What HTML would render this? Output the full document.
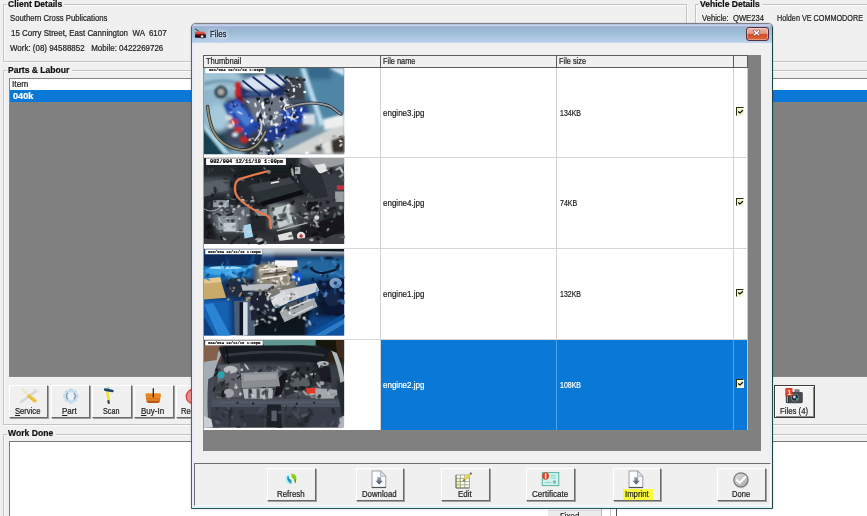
<!DOCTYPE html>
<html lang="en"><head><meta charset="utf-8"><title>Files</title>
<style>
html,body{margin:0;padding:0}
body{width:867px;height:516px;overflow:hidden;background:#f0f0f0;position:relative;font-family:"Liberation Sans",sans-serif;font-size:8.8px}
.a{position:absolute;box-sizing:border-box}
.t{-webkit-text-stroke:.22px currentColor;position:absolute;white-space:pre;line-height:12px;transform-origin:0 0;display:block}
.gb{border:1px solid #c4c4c4;box-shadow:1px 1px 0 #fbfbfb, inset 1px 1px 0 #fbfbfb}
.lbl{background:#f0f0f0}
.btn{background:#f0f0f0;border-top:1px solid #fff;border-left:1px solid #fff;border-right:1px solid #696969;border-bottom:1px solid #696969;box-shadow:1px 1px 0 #a0a0a0}
svg{position:absolute;overflow:visible}
u{text-decoration:underline}

</style></head>
<body>
<div class="a gb" style="left:2.5px;top:3.5px;width:684px;height:58px;"></div>
<div class="a lbl" style="left:6.5px;top:0px;width:57.5px;height:9px;"></div>
<span class="t" style="left:8.30px;top:-1.79px;font-size:9.2px;color:#101010;transform:scaleX(0.9312);font-weight:bold;">Client Details</span>
<span class="t" style="left:10.00px;top:11.75px;font-size:8.8px;color:#1e1e1e;transform:scaleX(0.8775);">Southern Cross Publications</span>
<span class="t" style="left:11.40px;top:27.05px;font-size:8.8px;color:#1e1e1e;transform:scaleX(0.9031);">15 Corry Street, East Cannington  WA  6107</span>
<span class="t" style="left:10.00px;top:42.15px;font-size:8.8px;color:#1e1e1e;transform:scaleX(0.9042);">Work: (08) 94588852   Mobile: 0422269726</span>
<div class="a gb" style="left:695px;top:3.5px;width:185px;height:58px;"></div>
<div class="a lbl" style="left:698.5px;top:0px;width:63.5px;height:9px;"></div>
<span class="t" style="left:700.30px;top:-1.79px;font-size:9.2px;color:#101010;transform:scaleX(0.9276);font-weight:bold;">Vehicle Details</span>
<span class="t" style="left:702.30px;top:11.85px;font-size:8.8px;color:#1e1e1e;transform:scaleX(0.8671);">Vehicle:  QWE234</span>
<span class="t" style="left:776.80px;top:11.85px;font-size:8.8px;color:#1e1e1e;transform:scaleX(0.8221);">Holden VE COMMODORE</span>
<div class="a gb" style="left:2.5px;top:70px;width:877.5px;height:354.5px;"></div>
<div class="a lbl" style="left:6.5px;top:65px;width:65px;height:11px;"></div>
<span class="t" style="left:8.30px;top:64.21px;font-size:9.2px;color:#101010;transform:scaleX(0.9323);font-weight:bold;">Parts &amp; Labour</span>
<div class="a " style="left:9px;top:77.6px;width:871px;height:299.9px;background:#808080;border:1px solid #868686"></div>
<div class="a " style="left:10.5px;top:101px;width:869.5px;height:1px;background:#33608e"></div>
<div class="a " style="left:10px;top:78.6px;width:870px;height:11.4px;background:#fff"></div>
<span class="t" style="left:12.00px;top:78.25px;font-size:8.8px;color:#1e1e1e;transform:scaleX(0.9527);">Item</span>
<div class="a " style="left:10px;top:90px;width:870px;height:11.5px;background:#0a78d6"></div>
<span class="t" style="left:12.70px;top:89.61px;font-size:9.2px;color:#fff;transform:scaleX(0.9925);font-weight:bold;">040k</span>
<div class="a btn" style="left:8.5px;top:385px;width:39.9px;height:33px;"></div>
<div class="a btn" style="left:50.5px;top:385px;width:39.6px;height:33px;"></div>
<div class="a btn" style="left:92.2px;top:385px;width:39.6px;height:33px;"></div>
<div class="a btn" style="left:133.7px;top:385px;width:39.9px;height:33px;"></div>
<div class="a btn" style="left:175.5px;top:385px;width:39.5px;height:33px;"></div>
<svg style="left:18px;top:386px" width="22" height="20" viewBox="18 386 22 20"><g stroke-linecap="round" fill="none"><path d="M21 402 L35.5 391.5" stroke="#d4d8dc" stroke-width="2.4"/><path d="M34 390 l3 1.5" stroke="#dde0e4" stroke-width="2.5"/><path d="M21.5 388.8 L28 395" stroke="#ede6b4" stroke-width="1.6"/><path d="M28 395.2 L36 401.6" stroke="#e6bd30" stroke-width="3.4" stroke-linecap="butt"/><path d="M28.6 394.6 L36.6 401" stroke="#f2d668" stroke-width="1"/></g></svg>
<svg style="left:62px;top:387px" width="18" height="18" viewBox="62 387 18 18"><path d="M78.05 394.65 L78.05 397.55 L76.25 397.75 L75.85 398.71 L76.98 400.13 L74.93 402.18 L73.51 401.05 L72.55 401.45 L72.35 403.25 L69.45 403.25 L69.25 401.45 L68.29 401.05 L66.87 402.18 L64.82 400.13 L65.95 398.71 L65.55 397.75 L63.75 397.55 L63.75 394.65 L65.55 394.45 L65.95 393.49 L64.82 392.07 L66.87 390.02 L68.29 391.15 L69.25 390.75 L69.45 388.95 L72.35 388.95 L72.55 390.75 L73.51 391.15 L74.93 390.02 L76.98 392.07 L75.85 393.49 L76.25 394.45 Z" fill="#c9e0ec" stroke="#b4d0e0" stroke-width=".6" stroke-linejoin="round"/><circle cx="70.9" cy="396.1" r="3.9" fill="#e8f3f8"/><path d="M68 392.9 a4.3 4.3 0 0 0 0 6.4 M73.8 392.9 a4.3 4.3 0 0 1 0 6.4" fill="none" stroke="#7a90a8" stroke-width="1.2"/></svg><svg style="left:102px;top:386px" width="14" height="20" viewBox="102 386 14 20"><g fill="none" stroke-linecap="round"><path d="M107.4 392 L108.8 400.4" stroke="#efe142" stroke-width="2.8"/><path d="M108.4 401 l0.4 2" stroke="#3c4648" stroke-width="2.2"/><path d="M105.2 389.6 L112.4 391" stroke="#20406a" stroke-width="2.6"/><path d="M106.4 388.6 l2.4 -0.6" stroke="#58a0b0" stroke-width="1.2"/></g></svg>
<svg style="left:143px;top:386px" width="20" height="19" viewBox="143 386 20 19"><defs><linearGradient id="gbk" x1="0" y1="0" x2="0" y2="1"><stop offset="0" stop-color="#ec9024"/><stop offset=".5" stop-color="#e07818"/><stop offset="1" stop-color="#b4500e"/></linearGradient></defs><path d="M145.4 394.6 Q145.4 393.2 147 393.2 H159.4 Q161 393.2 161 394.6 L159.8 401.6 Q159.6 403 158 403 H148.4 Q146.8 403 146.6 401.6 Z" fill="url(#gbk)"/><path d="M146.4 397 H160 M147 400 H159.6" stroke="#f4a848" stroke-width=".7" fill="none"/><path d="M153.3 388.3 V397.4" stroke="#3a1c0c" stroke-width="1.3"/></svg>
<svg style="left:184px;top:388px" width="18" height="18" viewBox="184 388 18 18"><circle cx="193.5" cy="396.5" r="7.2" fill="#ec8c8c" stroke="#d84848" stroke-width="1.4"/></svg>

<span class="t" style="left:15.40px;top:404.75px;font-size:8.8px;color:#1e1e1e;transform:scaleX(0.8656);"><u>S</u>ervice</span>
<span class="t" style="left:61.90px;top:404.75px;font-size:8.8px;color:#1e1e1e;transform:scaleX(0.9107);"><u>P</u>art</span>
<span class="t" style="left:103.30px;top:404.75px;font-size:8.8px;color:#1e1e1e;transform:scaleX(0.8174);">Scan</span>
<span class="t" style="left:140.90px;top:404.75px;font-size:8.8px;color:#1e1e1e;transform:scaleX(0.9120);"><u>B</u>uy-In</span>
<span class="t" style="left:180.80px;top:404.75px;font-size:8.8px;color:#1e1e1e;transform:scaleX(0.8750);">Rec</span>
<div class="a " style="left:774px;top:385px;width:40.5px;height:33px;background:#f3f3f3;border:1px solid #3a3a3a;box-shadow:inset 1px 1px 0 #fff, inset -1px -1px 0 #8a8a8a"></div>
<svg style="left:784px;top:387px" width="20" height="17" viewBox="784 387 20 17"><rect x="794.4" y="389.2" width="5.2" height="3.4" rx="1" fill="#7a7e84"/><rect x="785.8" y="392" width="17" height="11.2" rx="1.4" fill="#474b50"/><rect x="786" y="396" width="3.2" height="7" fill="#2c3034"/><rect x="786.8" y="396.4" width="1" height="6" fill="#b8c4c0"/><circle cx="795" cy="397.6" r="3.7" fill="#1d2c3c" stroke="#8a9094" stroke-width=".8"/><circle cx="794.4" cy="397" r="1.4" fill="#d8d0e8"/><circle cx="797" cy="399" r="1.1" fill="#48b088"/><rect x="785.3" y="388" width="7.2" height="8.2" rx="1.2" fill="#e03a2a"/><text x="787.3" y="395.2" font-family="'Liberation Sans',sans-serif" font-weight="bold" font-size="7.5" fill="#fff4c8">1</text></svg>

<span class="t" style="left:779.70px;top:405.05px;font-size:8.8px;color:#1e1e1e;transform:scaleX(0.8842);">Files (4)</span>
<div class="a gb" style="left:2.5px;top:433.5px;width:877.5px;height:106.5px;"></div>
<div class="a lbl" style="left:6.5px;top:428px;width:49px;height:11px;"></div>
<span class="t" style="left:8.30px;top:427.31px;font-size:9.2px;color:#101010;transform:scaleX(0.9353);font-weight:bold;">Work Done</span>
<div class="a " style="left:9px;top:440.5px;width:871px;height:99.5px;background:#fff;border:1px solid #7a7a7a"></div>
<div class="a " style="left:548px;top:510px;width:53px;height:10px;background:#ececec;border-top:1px solid #d8d8d8"></div>
<div class="a " style="left:601px;top:509px;width:1px;height:7px;background:#b8b8b8"></div>
<div class="a " style="left:610px;top:509px;width:1px;height:7px;background:#c8c8c8"></div>
<div class="a " style="left:615.5px;top:509px;width:1.5px;height:7px;background:#555"></div>
<span class="t" style="left:559.70px;top:510.15px;font-size:8.8px;color:#1e1e1e;transform:scaleX(0.8970);">Fixed</span>
<div class="a " style="left:191px;top:23px;width:582px;height:486px;border-radius:5px 5px 1px 1px;background:#f0f0f0;border:1px solid;border-color:#7a8088 #1c4444 #2c5454 #566068;box-shadow:0 0 2px 0 rgba(0,0,0,.22), inset -1px -1px 0 #d2f3f7, inset 1px 1px 0 #e6ecf8, inset 0 0 0 2px #eaecf8;overflow:hidden"><div class="a" style="left:0;top:0;width:100%;height:19.4px;background:linear-gradient(180deg,#b4c0dc 0,#c6d0ea 1.6px,#9db1d1 2.8px,#9bbdd6 8.5px,#b5cde9 17px,#c2d6ee 18.6px,#f4f8fc 19.4px)"></div></div>
<svg style="left:193px;top:27px" width="15" height="13" viewBox="193 27 15 13"><defs><linearGradient id="gcar" x1="0" y1="0" x2="0" y2="1"><stop offset="0" stop-color="#e26a58"/><stop offset=".42" stop-color="#c4382a"/><stop offset=".5" stop-color="#5a0c14"/><stop offset="1" stop-color="#22040a"/></linearGradient></defs><path d="M195.1 28.9 L199.4 31.6" stroke="#343c4c" stroke-width="1.1" fill="none"/><path d="M195 32.6 Q195 31.6 196.2 31.6 H203 Q205.6 32.4 205.8 34.6 V37 Q205.8 37.8 204.8 37.8 H195.8 Q195 37.8 195 37 Z" fill="url(#gcar)"/><rect x="203" y="35" width="2.8" height="2.6" fill="#20203c"/><circle cx="202.1" cy="36.5" r="1.9" fill="#2a1418"/><circle cx="202.1" cy="36.5" r="1.25" fill="#f4ecec"/></svg>

<span class="t" style="left:209.90px;top:28.34px;font-size:9.4px;color:#16233f;transform:scaleX(0.8284);-webkit-text-stroke:.3px #16233f;text-shadow:0 0 3px #fff,0 0 5px #fff,0 0 6px #fff;">Files</span>
<div class="a " style="left:746px;top:27px;width:23px;height:13.5px;border:1px solid #55313f;border-radius:3px;background:linear-gradient(180deg,#eab3a4 0,#e39a86 45%,#d0502b 50%,#d8643a 100%);box-shadow:inset 0 0 0 1px rgba(255,255,255,.35)"></div>
<svg style="left:753.4px;top:30.4px" width="7.2" height="5.8" viewBox="0 0 8 6.4"><path d="M1.6 1.2 L6.4 5.2 M6.4 1.2 L1.6 5.2" stroke="#6a3038" stroke-width="2.6" stroke-linecap="square"/><path d="M1.6 1.2 L6.4 5.2 M6.4 1.2 L1.6 5.2" stroke="#fff" stroke-width="1.6" stroke-linecap="square"/></svg>
<div class="a " style="left:203px;top:55px;width:557.5px;height:396px;background:#808080"></div>
<div class="a " style="left:203px;top:55px;width:545px;height:12.5px;background:#f0f0f0;border-top:1px solid #5c5c5c;border-bottom:1px solid #5c5c5c;border-left:1px solid #5c5c5c"></div>
<div class="a " style="left:380px;top:55px;width:1px;height:12.5px;background:#5c5c5c"></div>
<div class="a " style="left:556px;top:55px;width:1px;height:12.5px;background:#5c5c5c"></div>
<div class="a " style="left:733px;top:55px;width:1px;height:12.5px;background:#5c5c5c"></div>
<div class="a " style="left:747px;top:55px;width:1px;height:12.5px;background:#5c5c5c"></div>
<span class="t" style="left:206.30px;top:55.15px;font-size:8.8px;color:#1e1e1e;transform:scaleX(0.8569);">Thumbnail</span>
<span class="t" style="left:382.60px;top:55.15px;font-size:8.8px;color:#1e1e1e;transform:scaleX(0.8388);">File name</span>
<span class="t" style="left:558.90px;top:55.15px;font-size:8.8px;color:#1e1e1e;transform:scaleX(0.8368);">File size</span>
<div class="a " style="left:203px;top:67.5px;width:545px;height:362.5px;background:#fff;border-left:1px solid #9a9a9a"></div>
<div class="a " style="left:381px;top:339.2px;width:367px;height:90.8px;background:#0a78d6"></div>
<div class="a " style="left:204px;top:157.2px;width:544px;height:1.2px;background:#d6d6d6"></div>
<div class="a " style="left:204px;top:247.9px;width:544px;height:1.2px;background:#d6d6d6"></div>
<div class="a " style="left:204px;top:338.6px;width:544px;height:1.2px;background:#d6d6d6"></div>
<div class="a " style="left:379.9px;top:67.5px;width:1.2px;height:362.5px;background:#d2d2d2"></div>
<div class="a " style="left:555.9px;top:67.5px;width:1.2px;height:362.5px;background:#d2d2d2"></div>
<div class="a " style="left:732.9px;top:67.5px;width:1.2px;height:362.5px;background:#d2d2d2"></div>
<div class="a " style="left:556px;top:339.7px;width:1px;height:90.3px;background:#4ca4f0"></div>
<div class="a " style="left:733px;top:339.7px;width:1px;height:90.3px;background:#4ca4f0"></div>
<div class="a " style="left:747px;top:67.5px;width:1px;height:362.5px;background:#c8c8c8"></div>
<span class="t" style="left:382.60px;top:106.60px;font-size:8.8px;color:#1e1e1e;transform:scaleX(0.9099);">engine3.jpg</span>
<span class="t" style="left:559.80px;top:106.60px;font-size:8.8px;color:#1e1e1e;transform:scaleX(0.7948);">134KB</span>
<div class="a " style="left:736px;top:107.45px;width:8.2px;height:8.3px;background:#f1f5d2;border-top:1px solid #2c2c10;border-left:1px solid #2c2c10;border-right:1px solid #f4f6e0;border-bottom:1px solid #f4f6e0"></div>
<svg style="left:737px;top:108.05px" width="7" height="7" viewBox="0 0 7 7"><path d="M1.2 3.6 L2.9 5 L5.9 2.3" fill="none" stroke="#0c0c04" stroke-width="1.3"/></svg>
<span class="t" style="left:382.60px;top:197.10px;font-size:8.8px;color:#1e1e1e;transform:scaleX(0.9099);">engine4.jpg</span>
<span class="t" style="left:559.80px;top:197.10px;font-size:8.8px;color:#1e1e1e;transform:scaleX(0.7988);">74KB</span>
<div class="a " style="left:736px;top:197.95px;width:8.2px;height:8.3px;background:#f1f5d2;border-top:1px solid #2c2c10;border-left:1px solid #2c2c10;border-right:1px solid #f4f6e0;border-bottom:1px solid #f4f6e0"></div>
<svg style="left:737px;top:198.55px" width="7" height="7" viewBox="0 0 7 7"><path d="M1.2 3.6 L2.9 5 L5.9 2.3" fill="none" stroke="#0c0c04" stroke-width="1.3"/></svg>
<span class="t" style="left:382.60px;top:287.80px;font-size:8.8px;color:#1e1e1e;transform:scaleX(0.9099);">engine1.jpg</span>
<span class="t" style="left:559.80px;top:287.80px;font-size:8.8px;color:#1e1e1e;transform:scaleX(0.7948);">132KB</span>
<div class="a " style="left:736px;top:288.65px;width:8.2px;height:8.3px;background:#f1f5d2;border-top:1px solid #2c2c10;border-left:1px solid #2c2c10;border-right:1px solid #f4f6e0;border-bottom:1px solid #f4f6e0"></div>
<svg style="left:737px;top:289.25px" width="7" height="7" viewBox="0 0 7 7"><path d="M1.2 3.6 L2.9 5 L5.9 2.3" fill="none" stroke="#0c0c04" stroke-width="1.3"/></svg>
<span class="t" style="left:382.60px;top:378.55px;font-size:8.8px;color:#fff;transform:scaleX(0.9099);">engine2.jpg</span>
<span class="t" style="left:559.80px;top:378.55px;font-size:8.8px;color:#fff;transform:scaleX(0.7948);">108KB</span>
<div class="a " style="left:736px;top:379.4px;width:8.2px;height:8.3px;background:#f1f5d2;border-top:1px solid #2c2c10;border-left:1px solid #2c2c10;border-right:1px solid #f4f6e0;border-bottom:1px solid #f4f6e0"></div>
<svg style="left:737px;top:380px" width="7" height="7" viewBox="0 0 7 7"><path d="M1.2 3.6 L2.9 5 L5.9 2.3" fill="none" stroke="#0c0c04" stroke-width="1.3"/></svg>
<svg style="left:204.39px;top:67.87px" width="140.17" height="86.30" viewBox="8 5 804 495" preserveAspectRatio="none"><defs>
<filter id="b1a" x="-5%" y="-5%" width="110%" height="110%"><feGaussianBlur stdDeviation="14"/></filter>
<filter id="b1b" x="-5%" y="-5%" width="110%" height="110%"><feGaussianBlur stdDeviation="5"/></filter>
<filter id="b1c" x="-5%" y="-5%" width="110%" height="110%"><feGaussianBlur stdDeviation="2.6"/></filter>
<clipPath id="c1"><rect x="8" y="5" width="804" height="495"/></clipPath>
</defs>
<g clip-path="url(#c1)">
<rect x="8" y="5" width="804" height="495" fill="#7fa6bd"/>
<g filter="url(#b1a)">
 <rect x="-20" y="-20" width="260" height="270" fill="#8fb6cc"/>
 <rect x="200" y="-20" width="380" height="80" fill="#456f86"/>
 <rect x="560" y="-20" width="300" height="320" fill="#4f86a6"/>
 
 <rect x="600" y="-20" width="140" height="90" fill="#34688a"/>
 <rect x="-20" y="350" width="170" height="180" fill="#173f50"/>
 <rect x="130" y="180" width="480" height="280" fill="#3c4660"/>
 <rect x="560" y="400" width="300" height="130" fill="#a8acac"/>
 <rect x="240" y="390" width="190" height="130" fill="#2a3038"/>
 <ellipse cx="90" cy="290" rx="70" ry="80" fill="#a6cadc"/>
 <rect x="-10" y="40" width="230" height="40" fill="#a8c8da"/>
</g>
<g filter="url(#b1b)">
 <!-- body arcs top-left -->
 <path d="M10 95 Q 120 60 215 95" stroke="#6c98ac" stroke-width="14" fill="none"/>
 <path d="M10 125 Q 90 95 190 125" stroke="#b4d4e2" stroke-width="10" fill="none"/>
 <!-- air cleaner -->
 <ellipse cx="350" cy="124" rx="140" ry="82" fill="#1a2f68" transform="rotate(-6 350 124)"/>
 <ellipse cx="352" cy="88" rx="126" ry="44" fill="#d6e2f0" transform="rotate(-6 352 88)"/>
 <ellipse cx="320" cy="150" rx="80" ry="16" fill="#3c5888" transform="rotate(-4 320 150)"/>
 <rect x="186" y="85" width="32" height="82" fill="#c82222"/>
 <rect x="192" y="165" width="40" height="40" fill="#7a1818"/>
 <!-- carb right -->
 <rect x="470" y="55" width="115" height="135" fill="#3a4048"/>
 <!-- left valve cover -->
 <polygon points="120,215 200,180 335,330 262,402 170,330" fill="#2448aa"/>
 <polygon points="150,222 200,200 292,312 250,342" fill="#4c7ad0"/>
 <!-- chrome middle -->
 <polygon points="245,180 485,165 530,300 385,345 300,305" fill="#6c7484"/>
 <!-- right valve cover -->
 <polygon points="440,250 590,225 620,300 480,350" fill="#1e3ea6"/>
 <polygon points="380,345 520,300 565,360 425,425 335,425" fill="#24388c"/>
 <!-- red headers -->
 <ellipse cx="180" cy="315" rx="25" ry="18" fill="#c83030"/>
 <ellipse cx="205" cy="360" rx="25" ry="18" fill="#c83030"/>
 <ellipse cx="240" cy="415" rx="28" ry="20" fill="#c02828"/>
 <ellipse cx="160" cy="338" rx="18" ry="13" fill="#e0e4e8"/>
 <ellipse cx="186" cy="388" rx="18" ry="13" fill="#e0e4e8"/>
 <ellipse cx="150" cy="290" rx="20" ry="14" fill="#d8dce0"/>
 <!-- dark circle top-left -->
 <circle cx="105" cy="142" r="37" fill="#203e4a"/>
 <circle cx="105" cy="142" r="19" fill="#aaa9a0"/>
 <!-- strut right -->
 <polygon points="560,5 590,5 700,330 672,335" fill="#b8d8ea"/>
 <!-- strut bottom-left -->
 <polygon points="8,318 8,360 120,500 165,500" fill="#acd4e6"/>
 <!-- radiator top band -->
 <polygon points="413,423 693,338 693,392 413,500" fill="#7896a8"/>
 <polygon points="440,500 812,318 812,420 600,500" fill="#d2d4d2"/>
 <polygon points="723,5 813,5 813,52" fill="#d4e2ee"/>
 <polygon points="693,300 812,268 812,335 700,360" fill="#eef0f0"/>
 <!-- bottom right dark -->
 <polygon points="738,420 812,392 812,490 745,490" fill="#37302c"/><ellipse cx="665" cy="465" rx="20" ry="16" fill="#3a3836"/><polygon points="690,440 730,425 745,500 700,500" fill="#e2e4e2"/>
 <!-- chrome bits -->
 <circle cx="345" cy="485" r="28" fill="#b0b8c0"/>
 <rect x="575" y="268" width="70" height="62" fill="#d4dce4"/>
</g>
<g filter="url(#b1c)">
 <ellipse cx="324" cy="263" rx="11.4" ry="4.6" fill="#e0e6ec" transform="rotate(113 324 263)"/><ellipse cx="438" cy="333" rx="12.1" ry="5.3" fill="#8890a0" transform="rotate(35 438 333)"/><ellipse cx="418" cy="264" rx="13.8" ry="4.0" fill="#c8d0d8" transform="rotate(42 418 264)"/><ellipse cx="519" cy="259" rx="16.6" ry="6.1" fill="#f4f6f8" transform="rotate(12 519 259)"/><ellipse cx="518" cy="250" rx="18.6" ry="5.3" fill="#10141a" transform="rotate(129 518 250)"/><ellipse cx="372" cy="312" rx="15.1" ry="4.0" fill="#e0e6ec" transform="rotate(158 372 312)"/><ellipse cx="330" cy="288" rx="19.2" ry="5.6" fill="#10141a" transform="rotate(76 330 288)"/><ellipse cx="428" cy="261" rx="8.8" ry="6.4" fill="#f4f6f8" transform="rotate(61 428 261)"/><ellipse cx="458" cy="191" rx="21.6" ry="5.6" fill="#e0e6ec" transform="rotate(163 458 191)"/><ellipse cx="471" cy="200" rx="16.6" ry="7.0" fill="#e0e6ec" transform="rotate(51 471 200)"/><ellipse cx="399" cy="281" rx="10.4" ry="6.3" fill="#c8d0d8" transform="rotate(12 399 281)"/><ellipse cx="379" cy="183" rx="15.8" ry="5.2" fill="#2a3038" transform="rotate(68 379 183)"/><ellipse cx="421" cy="335" rx="7.6" ry="5.6" fill="#f4f6f8" transform="rotate(6 421 335)"/><ellipse cx="260" cy="198" rx="11.9" ry="4.7" fill="#f4f6f8" transform="rotate(28 260 198)"/><ellipse cx="362" cy="186" rx="14.6" ry="8.3" fill="#10141a" transform="rotate(157 362 186)"/><ellipse cx="450" cy="273" rx="13.8" ry="5.4" fill="#b0b8c4" transform="rotate(169 450 273)"/><ellipse cx="334" cy="281" rx="19.1" ry="5.1" fill="#1a2028" transform="rotate(79 334 281)"/><ellipse cx="412" cy="264" rx="6.1" ry="3.3" fill="#f4f6f8" transform="rotate(104 412 264)"/><ellipse cx="367" cy="272" rx="8.7" ry="3.4" fill="#2a3038" transform="rotate(60 367 272)"/><ellipse cx="461" cy="227" rx="16.9" ry="5.7" fill="#f4f6f8" transform="rotate(4 461 227)"/><ellipse cx="364" cy="279" rx="10.5" ry="4.2" fill="#c8d0d8" transform="rotate(32 364 279)"/><ellipse cx="347" cy="230" rx="11.1" ry="7.2" fill="#f4f6f8" transform="rotate(68 347 230)"/><ellipse cx="551" cy="290" rx="7.9" ry="3.7" fill="#1a2028" transform="rotate(118 551 290)"/><ellipse cx="324" cy="196" rx="12.9" ry="4.6" fill="#2a3038" transform="rotate(18 324 196)"/><ellipse cx="544" cy="288" rx="11.0" ry="3.4" fill="#e0e6ec" transform="rotate(173 544 288)"/><ellipse cx="354" cy="284" rx="15.7" ry="7.9" fill="#e0e6ec" transform="rotate(41 354 284)"/><ellipse cx="348" cy="319" rx="16.3" ry="4.7" fill="#e0e6ec" transform="rotate(61 348 319)"/><ellipse cx="500" cy="226" rx="6.6" ry="4.4" fill="#1a2028" transform="rotate(143 500 226)"/><ellipse cx="394" cy="280" rx="10.1" ry="4.3" fill="#10141a" transform="rotate(6 394 280)"/><ellipse cx="319" cy="302" rx="17.7" ry="6.6" fill="#1a2028" transform="rotate(93 319 302)"/><ellipse cx="419" cy="329" rx="20.4" ry="5.9" fill="#e0e6ec" transform="rotate(175 419 329)"/><ellipse cx="530" cy="292" rx="21.7" ry="6.1" fill="#f4f6f8" transform="rotate(162 530 292)"/><ellipse cx="303" cy="217" rx="14.1" ry="6.4" fill="#e0e6ec" transform="rotate(74 303 217)"/><ellipse cx="356" cy="208" rx="15.8" ry="7.7" fill="#2a3038" transform="rotate(141 356 208)"/><ellipse cx="318" cy="183" rx="11.7" ry="10.7" fill="#1a2028" transform="rotate(43 318 183)"/><ellipse cx="445" cy="324" rx="5.8" ry="3.9" fill="#b0b8c4" transform="rotate(48 445 324)"/><ellipse cx="411" cy="170" rx="12.4" ry="3.8" fill="#c8d0d8" transform="rotate(154 411 170)"/><ellipse cx="400" cy="166" rx="14.5" ry="6.7" fill="#c8d0d8" transform="rotate(88 400 166)"/><ellipse cx="348" cy="227" rx="14.5" ry="6.0" fill="#ffffff" transform="rotate(65 348 227)"/><ellipse cx="474" cy="311" rx="8.4" ry="9.1" fill="#b0b8c4" transform="rotate(83 474 311)"/><ellipse cx="368" cy="312" rx="12.7" ry="6.6" fill="#8890a0" transform="rotate(67 368 312)"/><ellipse cx="486" cy="220" rx="16.0" ry="8.5" fill="#ffffff" transform="rotate(3 486 220)"/><ellipse cx="416" cy="292" rx="6.8" ry="3.6" fill="#f4f6f8" transform="rotate(77 416 292)"/><ellipse cx="331" cy="248" rx="9.6" ry="3.0" fill="#b0b8c4" transform="rotate(119 331 248)"/><ellipse cx="496" cy="287" rx="15.3" ry="6.5" fill="#f4f6f8" transform="rotate(19 496 287)"/><ellipse cx="397" cy="205" rx="11.0" ry="4.9" fill="#10141a" transform="rotate(102 397 205)"/><ellipse cx="512" cy="288" rx="21.1" ry="5.5" fill="#e0e6ec" transform="rotate(104 512 288)"/><ellipse cx="409" cy="296" rx="9.0" ry="3.0" fill="#f4f6f8" transform="rotate(168 409 296)"/><ellipse cx="421" cy="325" rx="5.8" ry="5.8" fill="#ffffff" transform="rotate(180 421 325)"/><ellipse cx="391" cy="293" rx="13.8" ry="9.8" fill="#2a3038" transform="rotate(108 391 293)"/><ellipse cx="366" cy="205" rx="21.1" ry="6.3" fill="#10141a" transform="rotate(174 366 205)"/><ellipse cx="464" cy="304" rx="14.1" ry="6.5" fill="#10141a" transform="rotate(87 464 304)"/><ellipse cx="534" cy="258" rx="13.2" ry="4.6" fill="#1a2028" transform="rotate(33 534 258)"/><ellipse cx="483" cy="188" rx="16.1" ry="4.3" fill="#b0b8c4" transform="rotate(153 483 188)"/><ellipse cx="469" cy="239" rx="17.0" ry="7.0" fill="#ffffff" transform="rotate(48 469 239)"/><ellipse cx="345" cy="211" rx="11.9" ry="9.3" fill="#ffffff" transform="rotate(103 345 211)"/><ellipse cx="350" cy="307" rx="11.0" ry="2.7" fill="#ffffff" transform="rotate(86 350 307)"/><ellipse cx="395" cy="319" rx="16.3" ry="7.0" fill="#e0e6ec" transform="rotate(87 395 319)"/><ellipse cx="516" cy="236" rx="19.7" ry="5.1" fill="#ffffff" transform="rotate(84 516 236)"/><ellipse cx="526" cy="283" rx="10.2" ry="10.5" fill="#1a2028" transform="rotate(39 526 283)"/><ellipse cx="325" cy="196" rx="7.1" ry="5.7" fill="#f4f6f8" transform="rotate(127 325 196)"/><ellipse cx="518" cy="220" rx="13.1" ry="4.5" fill="#e0e6ec" transform="rotate(15 518 220)"/><ellipse cx="478" cy="224" rx="5.9" ry="3.6" fill="#e0e6ec" transform="rotate(68 478 224)"/><ellipse cx="315" cy="271" rx="15.7" ry="8.7" fill="#e0e6ec" transform="rotate(98 315 271)"/><ellipse cx="384" cy="243" rx="10.0" ry="7.1" fill="#2a3038" transform="rotate(95 384 243)"/><ellipse cx="460" cy="230" rx="12.8" ry="4.8" fill="#1a2028" transform="rotate(121 460 230)"/><ellipse cx="355" cy="268" rx="13.8" ry="5.1" fill="#f4f6f8" transform="rotate(92 355 268)"/><ellipse cx="473" cy="289" rx="9.7" ry="7.8" fill="#c8d0d8" transform="rotate(116 473 289)"/><ellipse cx="453" cy="183" rx="12.3" ry="10.8" fill="#10141a" transform="rotate(60 453 183)"/><ellipse cx="422" cy="283" rx="9.9" ry="6.3" fill="#e0e6ec" transform="rotate(32 422 283)"/><ellipse cx="451" cy="459" rx="18.7" ry="4.9" fill="#20242c" transform="rotate(133 451 459)"/><ellipse cx="278" cy="414" rx="17.2" ry="6.5" fill="#e8ecf0" transform="rotate(162 278 414)"/><ellipse cx="378" cy="479" rx="7.1" ry="6.7" fill="#fff" transform="rotate(45 378 479)"/><ellipse cx="333" cy="385" rx="18.2" ry="5.9" fill="#3050a0" transform="rotate(29 333 385)"/><ellipse cx="291" cy="439" rx="7.7" ry="6.9" fill="#e8ecf0" transform="rotate(175 291 439)"/><ellipse cx="331" cy="374" rx="20.3" ry="5.8" fill="#c0c8d0" transform="rotate(52 331 374)"/><ellipse cx="426" cy="448" rx="11.1" ry="2.9" fill="#181c24" transform="rotate(124 426 448)"/><ellipse cx="357" cy="398" rx="5.9" ry="5.1" fill="#10141a" transform="rotate(12 357 398)"/><ellipse cx="443" cy="453" rx="6.3" ry="3.7" fill="#fff" transform="rotate(55 443 453)"/><ellipse cx="362" cy="417" rx="8.8" ry="9.2" fill="#e8ecf0" transform="rotate(176 362 417)"/><ellipse cx="387" cy="428" rx="9.5" ry="5.4" fill="#181c24" transform="rotate(151 387 428)"/><ellipse cx="547" cy="371" rx="18.1" ry="4.8" fill="#10141a" transform="rotate(170 547 371)"/><ellipse cx="419" cy="483" rx="8.6" ry="4.2" fill="#3050a0" transform="rotate(106 419 483)"/><ellipse cx="281" cy="491" rx="6.4" ry="3.9" fill="#c0c8d0" transform="rotate(110 281 491)"/><ellipse cx="369" cy="488" rx="10.0" ry="6.3" fill="#c0c8d0" transform="rotate(57 369 488)"/><ellipse cx="479" cy="389" rx="12.9" ry="4.4" fill="#20242c" transform="rotate(15 479 389)"/><ellipse cx="425" cy="405" rx="9.3" ry="3.8" fill="#181c24" transform="rotate(149 425 405)"/><ellipse cx="459" cy="363" rx="17.4" ry="6.7" fill="#10141a" transform="rotate(144 459 363)"/><ellipse cx="513" cy="361" rx="18.0" ry="4.7" fill="#3050a0" transform="rotate(113 513 361)"/><ellipse cx="390" cy="367" rx="6.7" ry="7.0" fill="#c0c8d0" transform="rotate(76 390 367)"/><ellipse cx="401" cy="500" rx="19.8" ry="5.0" fill="#181c24" transform="rotate(82 401 500)"/><ellipse cx="470" cy="391" rx="8.8" ry="4.3" fill="#e8ecf0" transform="rotate(162 470 391)"/><ellipse cx="379" cy="498" rx="17.1" ry="6.7" fill="#10141a" transform="rotate(90 379 498)"/><ellipse cx="322" cy="419" rx="11.8" ry="5.1" fill="#e8ecf0" transform="rotate(91 322 419)"/><ellipse cx="490" cy="398" rx="11.0" ry="7.4" fill="#3050a0" transform="rotate(87 490 398)"/><ellipse cx="322" cy="476" rx="13.2" ry="4.3" fill="#10141a" transform="rotate(59 322 476)"/><ellipse cx="404" cy="471" rx="15.4" ry="4.8" fill="#fff" transform="rotate(63 404 471)"/><ellipse cx="370" cy="490" rx="13.6" ry="3.7" fill="#3050a0" transform="rotate(31 370 490)"/><ellipse cx="424" cy="367" rx="19.2" ry="5.1" fill="#fff" transform="rotate(86 424 367)"/><ellipse cx="293" cy="447" rx="11.3" ry="4.5" fill="#20242c" transform="rotate(169 293 447)"/><ellipse cx="463" cy="407" rx="14.9" ry="4.8" fill="#fff" transform="rotate(115 463 407)"/><ellipse cx="440" cy="440" rx="9.7" ry="3.2" fill="#fff" transform="rotate(32 440 440)"/><ellipse cx="282" cy="415" rx="5.7" ry="6.0" fill="#10141a" transform="rotate(24 282 415)"/><ellipse cx="429" cy="406" rx="11.0" ry="4.1" fill="#c0c8d0" transform="rotate(13 429 406)"/><ellipse cx="339" cy="485" rx="6.0" ry="3.2" fill="#181c24" transform="rotate(50 339 485)"/><ellipse cx="195" cy="217" rx="7.5" ry="7.6" fill="#1a3080" transform="rotate(96 195 217)"/><ellipse cx="247" cy="381" rx="4.7" ry="4.7" fill="#dfe8f8" transform="rotate(75 247 381)"/><ellipse cx="175" cy="320" rx="14.7" ry="6.2" fill="#dfe8f8" transform="rotate(71 175 320)"/><ellipse cx="188" cy="216" rx="5.1" ry="3.2" fill="#dfe8f8" transform="rotate(147 188 216)"/><ellipse cx="168" cy="206" rx="12.2" ry="5.2" fill="#16286c" transform="rotate(111 168 206)"/><ellipse cx="266" cy="277" rx="8.3" ry="3.4" fill="#1a3080" transform="rotate(82 266 277)"/><ellipse cx="180" cy="224" rx="8.4" ry="8.4" fill="#16286c" transform="rotate(54 180 224)"/><ellipse cx="305" cy="342" rx="10.3" ry="2.6" fill="#16286c" transform="rotate(21 305 342)"/><ellipse cx="163" cy="259" rx="13.0" ry="6.9" fill="#7aa4e8" transform="rotate(173 163 259)"/><ellipse cx="283" cy="308" rx="11.4" ry="7.2" fill="#fff" transform="rotate(125 283 308)"/><ellipse cx="229" cy="356" rx="3.8" ry="3.7" fill="#7aa4e8" transform="rotate(49 229 356)"/><ellipse cx="259" cy="399" rx="10.6" ry="7.1" fill="#1a3080" transform="rotate(69 259 399)"/><ellipse cx="164" cy="210" rx="6.4" ry="2.1" fill="#dfe8f8" transform="rotate(23 164 210)"/><ellipse cx="229" cy="221" rx="7.2" ry="4.9" fill="#16286c" transform="rotate(25 229 221)"/><ellipse cx="213" cy="262" rx="17.9" ry="4.6" fill="#dfe8f8" transform="rotate(27 213 262)"/><ellipse cx="166" cy="246" rx="6.4" ry="2.8" fill="#1a3080" transform="rotate(110 166 246)"/><ellipse cx="321" cy="333" rx="10.6" ry="4.2" fill="#7aa4e8" transform="rotate(122 321 333)"/><ellipse cx="320" cy="331" rx="9.4" ry="5.2" fill="#16286c" transform="rotate(71 320 331)"/><ellipse cx="481" cy="345" rx="6.9" ry="2.4" fill="#dfe8f8" transform="rotate(15 481 345)"/><ellipse cx="586" cy="288" rx="5.6" ry="6.3" fill="#fff" transform="rotate(88 586 288)"/><ellipse cx="529" cy="249" rx="8.8" ry="8.7" fill="#7aa4e8" transform="rotate(42 529 249)"/><ellipse cx="566" cy="290" rx="12.2" ry="3.4" fill="#1a3080" transform="rotate(131 566 290)"/><ellipse cx="510" cy="329" rx="3.9" ry="4.1" fill="#7aa4e8" transform="rotate(42 510 329)"/><ellipse cx="530" cy="306" rx="14.3" ry="5.9" fill="#7aa4e8" transform="rotate(26 530 306)"/><ellipse cx="566" cy="244" rx="12.6" ry="6.3" fill="#fff" transform="rotate(105 566 244)"/><ellipse cx="491" cy="270" rx="9.6" ry="8.5" fill="#7aa4e8" transform="rotate(138 491 270)"/><ellipse cx="536" cy="264" rx="9.1" ry="3.5" fill="#101c50" transform="rotate(89 536 264)"/><ellipse cx="535" cy="289" rx="7.1" ry="2.0" fill="#101c50" transform="rotate(91 535 289)"/><ellipse cx="480" cy="255" rx="4.3" ry="2.6" fill="#fff" transform="rotate(48 480 255)"/><ellipse cx="486" cy="262" rx="10.9" ry="5.8" fill="#7aa4e8" transform="rotate(118 486 262)"/><ellipse cx="470" cy="308" rx="11.0" ry="8.5" fill="#1a3080" transform="rotate(138 470 308)"/><ellipse cx="508" cy="330" rx="13.4" ry="3.7" fill="#101c50" transform="rotate(25 508 330)"/><ellipse cx="677" cy="419" rx="9.6" ry="2.8" fill="#fff" transform="rotate(1 677 419)"/><ellipse cx="677" cy="449" rx="12.0" ry="3.2" fill="#585858" transform="rotate(126 677 449)"/><ellipse cx="603" cy="493" rx="13.2" ry="7.0" fill="#d8dcdc" transform="rotate(30 603 493)"/><ellipse cx="793" cy="447" rx="11.5" ry="6.5" fill="#d8dcdc" transform="rotate(134 793 447)"/><ellipse cx="792" cy="397" rx="10.0" ry="3.1" fill="#404040" transform="rotate(160 792 397)"/><ellipse cx="790" cy="422" rx="6.0" ry="6.5" fill="#d8dcdc" transform="rotate(128 790 422)"/><ellipse cx="655" cy="434" rx="6.2" ry="3.3" fill="#d8dcdc" transform="rotate(163 655 434)"/><ellipse cx="753" cy="396" rx="11.5" ry="7.1" fill="#a0a8a8" transform="rotate(161 753 396)"/><ellipse cx="792" cy="425" rx="10.6" ry="4.1" fill="#fff" transform="rotate(17 792 425)"/><ellipse cx="597" cy="492" rx="8.0" ry="8.7" fill="#fff" transform="rotate(49 597 492)"/><ellipse cx="524" cy="131" rx="13.4" ry="6.6" fill="#fff" transform="rotate(91 524 131)"/><ellipse cx="493" cy="164" rx="11.1" ry="4.4" fill="#20242c" transform="rotate(34 493 164)"/><ellipse cx="506" cy="67" rx="14.7" ry="5.3" fill="#20242c" transform="rotate(8 506 67)"/><ellipse cx="586" cy="143" rx="8.4" ry="7.1" fill="#fff" transform="rotate(3 586 143)"/><ellipse cx="478" cy="60" rx="14.4" ry="5.9" fill="#10141a" transform="rotate(140 478 60)"/><ellipse cx="523" cy="169" rx="11.7" ry="4.5" fill="#8890a0" transform="rotate(90 523 169)"/><ellipse cx="480" cy="143" rx="10.0" ry="4.4" fill="#e8ecf0" transform="rotate(168 480 143)"/><ellipse cx="555" cy="98" rx="6.9" ry="4.6" fill="#e8ecf0" transform="rotate(13 555 98)"/><ellipse cx="518" cy="169" rx="12.8" ry="3.3" fill="#e8ecf0" transform="rotate(153 518 169)"/><ellipse cx="496" cy="180" rx="6.2" ry="3.5" fill="#20242c" transform="rotate(128 496 180)"/><ellipse cx="479" cy="140" rx="10.4" ry="7.2" fill="#10141a" transform="rotate(16 479 140)"/><ellipse cx="581" cy="73" rx="7.6" ry="8.9" fill="#20242c" transform="rotate(84 581 73)"/><ellipse cx="491" cy="131" rx="7.7" ry="6.1" fill="#c0c8d0" transform="rotate(132 491 131)"/><ellipse cx="520" cy="107" rx="13.1" ry="3.3" fill="#fff" transform="rotate(0 520 107)"/><ellipse cx="506" cy="174" rx="7.4" ry="4.1" fill="#8890a0" transform="rotate(154 506 174)"/><ellipse cx="539" cy="61" rx="7.2" ry="3.7" fill="#fff" transform="rotate(2 539 61)"/><ellipse cx="509" cy="95" rx="4.8" ry="4.7" fill="#c0c8d0" transform="rotate(105 509 95)"/><ellipse cx="545" cy="72" rx="13.9" ry="4.2" fill="#20242c" transform="rotate(24 545 72)"/><ellipse cx="492" cy="76" rx="16.9" ry="5.2" fill="#c0c8d0" transform="rotate(45 492 76)"/><ellipse cx="489" cy="140" rx="12.4" ry="4.5" fill="#20242c" transform="rotate(70 489 140)"/><ellipse cx="542" cy="112" rx="4.7" ry="5.2" fill="#c0c8d0" transform="rotate(173 542 112)"/><ellipse cx="559" cy="108" rx="12.7" ry="3.5" fill="#fff" transform="rotate(88 559 108)"/>
</g>
<g filter="url(#b1c)" fill="none" stroke-linecap="round">
 <path d="M28 225 C 40 330, 60 420, 170 462 S 330 440, 360 370" stroke="#2e2e28" stroke-width="19"/>
 <path d="M28 225 C 40 330, 60 420, 170 462 S 330 440, 360 370" stroke="#948c76" stroke-width="11" stroke-dasharray="8 4"/>
 <path d="M480 235 C 560 205, 640 200, 700 215 S 770 260, 795 270" stroke="#262a30" stroke-width="18"/>
 <path d="M480 235 C 560 205, 640 200, 700 215 S 770 260, 795 270" stroke="#9a9ea0" stroke-width="10" stroke-dasharray="8 4"/>
 <path d="M330 300 C 345 330, 340 380, 300 420" stroke="#c8ccd0" stroke-width="10"/>
 <!-- air cleaner ribs -->
 <path d="M232 80 L 330 160 M290 58 L 400 142 M360 46 L 455 118 M425 44 L 480 92" stroke="#1a2c66" stroke-width="11"/>
</g>
<rect x="15" y="6" width="346" height="29" fill="#fff"/>

</g>
</svg>
<svg style="left:204.39px;top:158.39px" width="140.17" height="86.12" viewBox="8 8 804 494" preserveAspectRatio="none"><defs>
<filter id="b2a" x="-5%" y="-5%" width="110%" height="110%"><feGaussianBlur stdDeviation="12"/></filter>
<filter id="b2b" x="-5%" y="-5%" width="110%" height="110%"><feGaussianBlur stdDeviation="4.5"/></filter>
<filter id="b2c" x="-5%" y="-5%" width="110%" height="110%"><feGaussianBlur stdDeviation="2.5"/></filter>
<clipPath id="c2"><rect x="8" y="8" width="804" height="494"/></clipPath>
</defs>
<g clip-path="url(#c2)">
<rect x="8" y="8" width="804" height="494" fill="#23272c"/>
<g filter="url(#b2a)">
 <rect x="560" y="-20" width="300" height="80" fill="#7c8084"/>
 <rect x="-10" y="120" width="170" height="90" fill="#4c545c"/>
 <rect x="60" y="300" width="200" height="130" fill="#6a7078"/>
 <rect x="380" y="270" width="160" height="140" fill="#8c9494"/>
 <rect x="520" y="230" width="180" height="150" fill="#3c4044"/>
 <rect x="-10" y="440" width="860" height="80" fill="#32363a"/>
 <rect x="640" y="90" width="200" height="220" fill="#3a3e44"/>
 <rect x="200" y="60" width="400" height="60" fill="#181b1f"/>
 <rect x="560" y="380" width="280" height="100" fill="#1a1d21"/>
 <rect x="-10" y="380" width="90" height="100" fill="#1a1d21"/>
</g>
<g filter="url(#b2b)">
 <!-- engine cover -->
 <polygon points="250,170 500,120 570,190 330,260" fill="#2c3036"/>
 <polygon points="270,165 500,120 530,150 300,205" fill="#3c4048"/>
 <polygon points="330,262 570,192 580,215 345,285" fill="#0e1012"/>
 <!-- silver head -->
 <polygon points="395,300 490,275 520,380 440,410" fill="#c4cccc"/>
 <polygon points="430,330 480,320 490,360 450,370" fill="#6a7470"/>
 <!-- top right lighter -->
 <polygon points="600,8 812,8 812,40 700,70 640,50" fill="#9a9ea0"/>
 <polygon points="640,50 700,40 720,80 670,100" fill="#e4e6e4"/>
 <!-- right things -->
 <polygon points="560,40 680,100 720,230 640,240 560,130" fill="#2a2e34"/>
 <rect x="770" y="165" width="42" height="25" fill="#c83040"/>
 <rect x="760" y="200" width="50" height="60" fill="#9a9ea4"/>
 <!-- left side -->
 <polygon points="8,150 140,130 150,190 8,230" fill="#586068"/>
 <rect x="60" y="250" width="90" height="40" fill="#9098a0"/>
 <!-- wiring bottom-left -->
 <rect x="90" y="340" width="110" height="80" fill="#8a929a"/>
 <rect x="120" y="380" width="70" height="50" fill="#c0c8d0"/>
 <!-- blue cap -->
 <polygon points="235,395 275,385 290,460 240,470" fill="#a4d4ec"/>
 <!-- bottom label and cap -->
 <polygon points="430,450 510,430 525,480 445,498" fill="#e0e0dc"/>
 <circle cx="565" cy="455" r="24" fill="#e8e0e0"/>
 <circle cx="565" cy="455" r="10" fill="#c03030"/>
 <circle cx="655" cy="350" r="14" fill="#d8dcdc"/>
 <!-- bottom strip -->
 <polygon points="8,470 300,500 812,440 812,502 8,502" fill="#3a3e42"/>
 <polygon points="640,380 812,330 812,420 700,470" fill="#15171a"/>
 <!-- misc bright bits -->
 <rect x="300" y="300" width="70" height="40" fill="#8c9498"/>
 <rect x="190" y="290" width="80" height="50" fill="#5c646c"/>
 <rect x="530" y="60" width="50" height="40" fill="#b0b4b4"/>
 <rect x="600" y="260" width="60" height="50" fill="#14161a"/>
</g>
<g id="spk2" filter="url(#b2c)" opacity=".8"><ellipse cx="141" cy="363" rx="14.3" ry="6.9" fill="#0a0c0e" transform="rotate(39 141 363)"/><ellipse cx="658" cy="285" rx="10.3" ry="7.5" fill="#b8c0c4" transform="rotate(1 658 285)"/><ellipse cx="758" cy="248" rx="9.8" ry="3.3" fill="#0c0e10" transform="rotate(166 758 248)"/><ellipse cx="359" cy="498" rx="15.1" ry="8.2" fill="#b8c0c4" transform="rotate(80 359 498)"/><ellipse cx="442" cy="365" rx="19.5" ry="5.2" fill="#14171a" transform="rotate(4 442 365)"/><ellipse cx="108" cy="468" rx="12.7" ry="5.5" fill="#0a0c0e" transform="rotate(62 108 468)"/><ellipse cx="129" cy="353" rx="15.4" ry="4.7" fill="#60686e" transform="rotate(13 129 353)"/><ellipse cx="176" cy="486" rx="21.3" ry="7.0" fill="#14171a" transform="rotate(137 176 486)"/><ellipse cx="106" cy="270" rx="13.2" ry="10.3" fill="#1c2024" transform="rotate(166 106 270)"/><ellipse cx="337" cy="221" rx="11.1" ry="6.2" fill="#e0e4e4" transform="rotate(179 337 221)"/><ellipse cx="222" cy="427" rx="9.8" ry="3.4" fill="#0c0e10" transform="rotate(177 222 427)"/><ellipse cx="403" cy="302" rx="12.6" ry="9.5" fill="#1c2024" transform="rotate(110 403 302)"/><ellipse cx="796" cy="110" rx="16.4" ry="6.4" fill="#b8c0c4" transform="rotate(150 796 110)"/><ellipse cx="287" cy="323" rx="7.3" ry="6.9" fill="#3c4248" transform="rotate(12 287 323)"/><ellipse cx="633" cy="225" rx="17.1" ry="6.3" fill="#60686e" transform="rotate(162 633 225)"/><ellipse cx="335" cy="495" rx="20.0" ry="8.2" fill="#0a0c0e" transform="rotate(159 335 495)"/><ellipse cx="415" cy="353" rx="14.9" ry="10.6" fill="#0a0c0e" transform="rotate(101 415 353)"/><ellipse cx="655" cy="401" rx="15.8" ry="4.7" fill="#8a9298" transform="rotate(9 655 401)"/><ellipse cx="537" cy="75" rx="8.8" ry="4.9" fill="#3c4248" transform="rotate(157 537 75)"/><ellipse cx="799" cy="388" rx="10.2" ry="7.2" fill="#1c2024" transform="rotate(173 799 388)"/><ellipse cx="741" cy="271" rx="24.2" ry="6.7" fill="#3c4248" transform="rotate(66 741 271)"/><ellipse cx="717" cy="325" rx="12.6" ry="5.2" fill="#8a9298" transform="rotate(153 717 325)"/><ellipse cx="120" cy="319" rx="9.5" ry="3.3" fill="#3c4248" transform="rotate(69 120 319)"/><ellipse cx="775" cy="70" rx="15.5" ry="5.9" fill="#e0e4e4" transform="rotate(153 775 70)"/><ellipse cx="215" cy="238" rx="24.4" ry="6.7" fill="#14171a" transform="rotate(24 215 238)"/><ellipse cx="327" cy="142" rx="17.8" ry="5.6" fill="#14171a" transform="rotate(13 327 142)"/><ellipse cx="535" cy="116" rx="11.5" ry="7.2" fill="#60686e" transform="rotate(89 535 116)"/><ellipse cx="507" cy="140" rx="13.5" ry="10.5" fill="#0c0e10" transform="rotate(134 507 140)"/><ellipse cx="494" cy="282" rx="10.6" ry="11.2" fill="#e0e4e4" transform="rotate(167 494 282)"/><ellipse cx="381" cy="88" rx="12.2" ry="10.0" fill="#8a9298" transform="rotate(128 381 88)"/><ellipse cx="783" cy="326" rx="12.9" ry="9.2" fill="#8a9298" transform="rotate(28 783 326)"/><ellipse cx="665" cy="413" rx="13.4" ry="5.6" fill="#0c0e10" transform="rotate(98 665 413)"/><ellipse cx="417" cy="383" rx="16.1" ry="10.3" fill="#1c2024" transform="rotate(126 417 383)"/><ellipse cx="617" cy="143" rx="12.4" ry="7.7" fill="#14171a" transform="rotate(36 617 143)"/><ellipse cx="264" cy="497" rx="5.3" ry="5.3" fill="#0a0c0e" transform="rotate(13 264 497)"/><ellipse cx="414" cy="477" rx="17.4" ry="6.1" fill="#1c2024" transform="rotate(85 414 477)"/><ellipse cx="321" cy="237" rx="6.1" ry="6.6" fill="#60686e" transform="rotate(78 321 237)"/><ellipse cx="230" cy="319" rx="10.9" ry="5.7" fill="#e0e4e4" transform="rotate(144 230 319)"/><ellipse cx="318" cy="274" rx="19.5" ry="5.0" fill="#0a0c0e" transform="rotate(15 318 274)"/><ellipse cx="147" cy="224" rx="11.1" ry="8.4" fill="#8a9298" transform="rotate(81 147 224)"/><ellipse cx="205" cy="463" rx="12.3" ry="4.9" fill="#0c0e10" transform="rotate(148 205 463)"/><ellipse cx="138" cy="149" rx="20.5" ry="7.1" fill="#3c4248" transform="rotate(16 138 149)"/><ellipse cx="72" cy="193" rx="21.8" ry="7.3" fill="#14171a" transform="rotate(83 72 193)"/><ellipse cx="805" cy="133" rx="13.5" ry="4.9" fill="#60686e" transform="rotate(67 805 133)"/><ellipse cx="218" cy="479" rx="8.6" ry="6.0" fill="#3c4248" transform="rotate(152 218 479)"/><ellipse cx="731" cy="283" rx="10.8" ry="3.9" fill="#3c4248" transform="rotate(129 731 283)"/><ellipse cx="764" cy="265" rx="13.0" ry="5.2" fill="#3c4248" transform="rotate(51 764 265)"/><ellipse cx="545" cy="334" rx="10.4" ry="2.6" fill="#b8c0c4" transform="rotate(39 545 334)"/><ellipse cx="660" cy="471" rx="9.9" ry="11.3" fill="#0c0e10" transform="rotate(90 660 471)"/><ellipse cx="328" cy="254" rx="16.6" ry="4.2" fill="#3c4248" transform="rotate(169 328 254)"/><ellipse cx="84" cy="196" rx="15.8" ry="4.4" fill="#3c4248" transform="rotate(67 84 196)"/><ellipse cx="467" cy="461" rx="15.0" ry="4.5" fill="#e0e4e4" transform="rotate(56 467 461)"/><ellipse cx="332" cy="303" rx="11.4" ry="3.5" fill="#0a0c0e" transform="rotate(152 332 303)"/><ellipse cx="718" cy="68" rx="9.5" ry="9.5" fill="#60686e" transform="rotate(162 718 68)"/><ellipse cx="130" cy="279" rx="13.5" ry="6.0" fill="#b8c0c4" transform="rotate(88 130 279)"/><ellipse cx="131" cy="128" rx="11.1" ry="4.3" fill="#14171a" transform="rotate(2 131 128)"/><ellipse cx="545" cy="142" rx="9.5" ry="2.9" fill="#b8c0c4" transform="rotate(65 545 142)"/><ellipse cx="55" cy="76" rx="14.5" ry="5.3" fill="#3c4248" transform="rotate(118 55 76)"/><ellipse cx="34" cy="162" rx="8.9" ry="6.3" fill="#60686e" transform="rotate(36 34 162)"/><ellipse cx="593" cy="291" rx="9.2" ry="2.8" fill="#0c0e10" transform="rotate(38 593 291)"/><ellipse cx="593" cy="327" rx="16.1" ry="6.1" fill="#b8c0c4" transform="rotate(4 593 327)"/><ellipse cx="405" cy="131" rx="21.3" ry="6.6" fill="#0c0e10" transform="rotate(163 405 131)"/><ellipse cx="183" cy="402" rx="18.4" ry="8.2" fill="#8a9298" transform="rotate(164 183 402)"/><ellipse cx="322" cy="474" rx="22.4" ry="7.1" fill="#b8c0c4" transform="rotate(2 322 474)"/><ellipse cx="147" cy="177" rx="6.1" ry="3.5" fill="#3c4248" transform="rotate(135 147 177)"/><ellipse cx="756" cy="296" rx="13.8" ry="10.6" fill="#1c2024" transform="rotate(180 756 296)"/><ellipse cx="238" cy="258" rx="21.8" ry="5.7" fill="#60686e" transform="rotate(164 238 258)"/><ellipse cx="334" cy="138" rx="16.5" ry="5.0" fill="#3c4248" transform="rotate(65 334 138)"/><ellipse cx="807" cy="461" rx="22.2" ry="7.3" fill="#60686e" transform="rotate(177 807 461)"/><ellipse cx="604" cy="154" rx="11.9" ry="6.9" fill="#8a9298" transform="rotate(178 604 154)"/><ellipse cx="107" cy="166" rx="13.1" ry="5.0" fill="#60686e" transform="rotate(139 107 166)"/><ellipse cx="531" cy="171" rx="10.8" ry="6.1" fill="#8a9298" transform="rotate(88 531 171)"/><ellipse cx="41" cy="438" rx="11.0" ry="3.5" fill="#0a0c0e" transform="rotate(60 41 438)"/><ellipse cx="653" cy="384" rx="21.6" ry="5.4" fill="#e0e4e4" transform="rotate(68 653 384)"/><ellipse cx="34" cy="402" rx="14.8" ry="9.7" fill="#0a0c0e" transform="rotate(150 34 402)"/><ellipse cx="166" cy="160" rx="19.5" ry="6.0" fill="#0c0e10" transform="rotate(87 166 160)"/><ellipse cx="30" cy="463" rx="7.1" ry="4.3" fill="#0a0c0e" transform="rotate(64 30 463)"/><ellipse cx="489" cy="365" rx="20.8" ry="6.9" fill="#8a9298" transform="rotate(67 489 365)"/><ellipse cx="598" cy="262" rx="10.4" ry="2.9" fill="#b8c0c4" transform="rotate(107 598 262)"/><ellipse cx="724" cy="94" rx="11.4" ry="4.4" fill="#8a9298" transform="rotate(26 724 94)"/><ellipse cx="92" cy="332" rx="14.8" ry="6.8" fill="#0a0c0e" transform="rotate(24 92 332)"/><ellipse cx="183" cy="362" rx="11.9" ry="4.5" fill="#60686e" transform="rotate(66 183 362)"/><ellipse cx="686" cy="185" rx="12.1" ry="3.7" fill="#1c2024" transform="rotate(11 686 185)"/><ellipse cx="25" cy="379" rx="13.4" ry="6.9" fill="#1c2024" transform="rotate(90 25 379)"/><ellipse cx="309" cy="340" rx="13.1" ry="7.6" fill="#0a0c0e" transform="rotate(62 309 340)"/><ellipse cx="519" cy="261" rx="10.3" ry="7.7" fill="#0c0e10" transform="rotate(142 519 261)"/><ellipse cx="693" cy="455" rx="20.7" ry="6.7" fill="#14171a" transform="rotate(162 693 455)"/><ellipse cx="285" cy="128" rx="5.4" ry="3.7" fill="#8a9298" transform="rotate(125 285 128)"/><ellipse cx="181" cy="81" rx="6.5" ry="5.6" fill="#3c4248" transform="rotate(112 181 81)"/><ellipse cx="186" cy="109" rx="9.4" ry="8.7" fill="#14171a" transform="rotate(73 186 109)"/><ellipse cx="171" cy="368" rx="9.2" ry="9.0" fill="#14171a" transform="rotate(44 171 368)"/><ellipse cx="205" cy="250" rx="21.8" ry="5.9" fill="#0c0e10" transform="rotate(126 205 250)"/><ellipse cx="329" cy="482" rx="19.1" ry="6.9" fill="#e0e4e4" transform="rotate(159 329 482)"/><ellipse cx="36" cy="279" rx="21.4" ry="6.9" fill="#3c4248" transform="rotate(104 36 279)"/><ellipse cx="39" cy="342" rx="13.4" ry="9.4" fill="#8a9298" transform="rotate(85 39 342)"/><ellipse cx="435" cy="132" rx="12.1" ry="4.5" fill="#e0e4e4" transform="rotate(118 435 132)"/><ellipse cx="745" cy="189" rx="8.4" ry="3.5" fill="#3c4248" transform="rotate(88 745 189)"/><ellipse cx="614" cy="126" rx="7.3" ry="6.8" fill="#0a0c0e" transform="rotate(119 614 126)"/><ellipse cx="737" cy="82" rx="19.9" ry="6.0" fill="#14171a" transform="rotate(92 737 82)"/><ellipse cx="513" cy="268" rx="12.1" ry="7.1" fill="#0a0c0e" transform="rotate(36 513 268)"/><ellipse cx="511" cy="328" rx="14.4" ry="4.7" fill="#1c2024" transform="rotate(3 511 328)"/><ellipse cx="169" cy="74" rx="11.7" ry="3.4" fill="#60686e" transform="rotate(61 169 74)"/><ellipse cx="692" cy="484" rx="8.5" ry="5.0" fill="#60686e" transform="rotate(152 692 484)"/><ellipse cx="233" cy="321" rx="19.5" ry="7.0" fill="#b8c0c4" transform="rotate(86 233 321)"/><ellipse cx="304" cy="457" rx="12.4" ry="8.2" fill="#14171a" transform="rotate(135 304 457)"/><ellipse cx="715" cy="168" rx="16.7" ry="10.3" fill="#3c4248" transform="rotate(68 715 168)"/><ellipse cx="588" cy="72" rx="18.1" ry="4.9" fill="#60686e" transform="rotate(38 588 72)"/><ellipse cx="643" cy="444" rx="22.2" ry="6.7" fill="#0a0c0e" transform="rotate(176 643 444)"/><ellipse cx="531" cy="353" rx="6.8" ry="5.7" fill="#e0e4e4" transform="rotate(162 531 353)"/><ellipse cx="542" cy="190" rx="7.4" ry="4.1" fill="#0c0e10" transform="rotate(25 542 190)"/><ellipse cx="615" cy="133" rx="7.7" ry="3.7" fill="#b8c0c4" transform="rotate(13 615 133)"/><ellipse cx="98" cy="285" rx="9.8" ry="5.0" fill="#e0e4e4" transform="rotate(128 98 285)"/><ellipse cx="625" cy="478" rx="11.3" ry="7.6" fill="#e0e4e4" transform="rotate(1 625 478)"/><ellipse cx="679" cy="491" rx="10.6" ry="4.2" fill="#8a9298" transform="rotate(56 679 491)"/><ellipse cx="688" cy="119" rx="14.4" ry="3.8" fill="#3c4248" transform="rotate(63 688 119)"/><ellipse cx="666" cy="183" rx="10.3" ry="12.3" fill="#3c4248" transform="rotate(61 666 183)"/><ellipse cx="642" cy="365" rx="8.4" ry="9.2" fill="#b8c0c4" transform="rotate(5 642 365)"/><ellipse cx="469" cy="304" rx="21.8" ry="6.4" fill="#3c4248" transform="rotate(112 469 304)"/><ellipse cx="496" cy="147" rx="10.1" ry="3.4" fill="#b8c0c4" transform="rotate(74 496 147)"/><ellipse cx="182" cy="234" rx="20.9" ry="6.1" fill="#0c0e10" transform="rotate(134 182 234)"/><ellipse cx="204" cy="201" rx="9.8" ry="5.1" fill="#14171a" transform="rotate(157 204 201)"/><ellipse cx="505" cy="456" rx="14.3" ry="5.0" fill="#3c4248" transform="rotate(168 505 456)"/><ellipse cx="158" cy="331" rx="24.4" ry="6.9" fill="#14171a" transform="rotate(164 158 331)"/><ellipse cx="733" cy="304" rx="23.8" ry="6.4" fill="#14171a" transform="rotate(147 733 304)"/><ellipse cx="504" cy="64" rx="22.1" ry="5.6" fill="#0c0e10" transform="rotate(94 504 64)"/><ellipse cx="515" cy="88" rx="25.1" ry="6.5" fill="#e0e4e4" transform="rotate(79 515 88)"/><ellipse cx="300" cy="327" rx="11.0" ry="5.6" fill="#3c4248" transform="rotate(135 300 327)"/><ellipse cx="463" cy="341" rx="16.0" ry="10.4" fill="#3c4248" transform="rotate(167 463 341)"/><ellipse cx="136" cy="241" rx="8.6" ry="5.9" fill="#1c2024" transform="rotate(63 136 241)"/><ellipse cx="607" cy="222" rx="16.9" ry="4.6" fill="#60686e" transform="rotate(115 607 222)"/><ellipse cx="378" cy="268" rx="10.5" ry="7.6" fill="#8a9298" transform="rotate(99 378 268)"/><ellipse cx="628" cy="362" rx="11.3" ry="4.5" fill="#1c2024" transform="rotate(134 628 362)"/><ellipse cx="346" cy="161" rx="22.9" ry="6.6" fill="#3c4248" transform="rotate(37 346 161)"/><ellipse cx="793" cy="292" rx="12.5" ry="12.1" fill="#8a9298" transform="rotate(130 793 292)"/><ellipse cx="677" cy="272" rx="11.6" ry="7.9" fill="#14171a" transform="rotate(90 677 272)"/><ellipse cx="704" cy="343" rx="10.3" ry="9.5" fill="#14171a" transform="rotate(53 704 343)"/><ellipse cx="171" cy="297" rx="15.4" ry="7.1" fill="#60686e" transform="rotate(100 171 297)"/><ellipse cx="523" cy="367" rx="24.1" ry="7.1" fill="#3c4248" transform="rotate(71 523 367)"/><ellipse cx="355" cy="67" rx="9.2" ry="5.2" fill="#8a9298" transform="rotate(35 355 67)"/><ellipse cx="757" cy="337" rx="17.3" ry="8.2" fill="#60686e" transform="rotate(106 757 337)"/><ellipse cx="56" cy="219" rx="9.9" ry="6.0" fill="#0c0e10" transform="rotate(77 56 219)"/><ellipse cx="220" cy="131" rx="22.7" ry="6.6" fill="#60686e" transform="rotate(19 220 131)"/><ellipse cx="146" cy="316" rx="10.6" ry="4.8" fill="#14171a" transform="rotate(165 146 316)"/><ellipse cx="35" cy="83" rx="18.7" ry="5.7" fill="#3c4248" transform="rotate(102 35 83)"/><ellipse cx="144" cy="235" rx="16.4" ry="8.1" fill="#3c4248" transform="rotate(8 144 235)"/><ellipse cx="125" cy="472" rx="12.3" ry="4.8" fill="#e0e4e4" transform="rotate(30 125 472)"/><ellipse cx="284" cy="356" rx="9.1" ry="4.2" fill="#14171a" transform="rotate(32 284 356)"/><ellipse cx="796" cy="77" rx="23.0" ry="7.2" fill="#e0e4e4" transform="rotate(61 796 77)"/><ellipse cx="648" cy="270" rx="8.8" ry="3.0" fill="#1c2024" transform="rotate(72 648 270)"/><ellipse cx="471" cy="125" rx="9.0" ry="8.8" fill="#0a0c0e" transform="rotate(152 471 125)"/><ellipse cx="290" cy="259" rx="6.9" ry="1.7" fill="#c8d0d4" transform="rotate(33 290 259)"/><ellipse cx="238" cy="415" rx="7.6" ry="7.6" fill="#c8d0d4" transform="rotate(48 238 415)"/><ellipse cx="137" cy="356" rx="14.0" ry="5.0" fill="#c8d0d4" transform="rotate(166 137 356)"/><ellipse cx="199" cy="234" rx="6.5" ry="3.4" fill="#c8d0d4" transform="rotate(32 199 234)"/><ellipse cx="200" cy="427" rx="14.8" ry="3.8" fill="#90989c" transform="rotate(102 200 427)"/><ellipse cx="207" cy="284" rx="10.7" ry="6.8" fill="#e8ecec" transform="rotate(141 207 284)"/><ellipse cx="127" cy="287" rx="9.8" ry="5.1" fill="#c8d0d4" transform="rotate(62 127 287)"/><ellipse cx="161" cy="283" rx="9.1" ry="2.6" fill="#e8ecec" transform="rotate(72 161 283)"/><ellipse cx="134" cy="308" rx="8.0" ry="5.2" fill="#101214" transform="rotate(107 134 308)"/><ellipse cx="242" cy="419" rx="5.7" ry="5.6" fill="#c8d0d4" transform="rotate(80 242 419)"/><ellipse cx="164" cy="315" rx="16.4" ry="4.3" fill="#101214" transform="rotate(92 164 315)"/><ellipse cx="62" cy="326" rx="4.1" ry="4.6" fill="#e8ecec" transform="rotate(68 62 326)"/><ellipse cx="139" cy="305" rx="4.1" ry="4.5" fill="#e8ecec" transform="rotate(96 139 305)"/><ellipse cx="217" cy="251" rx="4.6" ry="4.2" fill="#101214" transform="rotate(27 217 251)"/><ellipse cx="70" cy="255" rx="7.6" ry="6.7" fill="#101214" transform="rotate(51 70 255)"/><ellipse cx="174" cy="244" rx="14.1" ry="3.7" fill="#90989c" transform="rotate(20 174 244)"/><ellipse cx="286" cy="234" rx="9.7" ry="3.7" fill="#e8ecec" transform="rotate(61 286 234)"/><ellipse cx="211" cy="355" rx="7.9" ry="6.4" fill="#e8ecec" transform="rotate(14 211 355)"/><ellipse cx="145" cy="255" rx="5.3" ry="3.8" fill="#e8ecec" transform="rotate(156 145 255)"/><ellipse cx="66" cy="388" rx="10.3" ry="4.1" fill="#c8d0d4" transform="rotate(72 66 388)"/><ellipse cx="236" cy="424" rx="7.5" ry="8.2" fill="#c8d0d4" transform="rotate(68 236 424)"/><ellipse cx="109" cy="388" rx="6.5" ry="7.0" fill="#101214" transform="rotate(124 109 388)"/><ellipse cx="171" cy="282" rx="5.5" ry="3.8" fill="#e8ecec" transform="rotate(12 171 282)"/><ellipse cx="103" cy="432" rx="4.8" ry="5.3" fill="#90989c" transform="rotate(29 103 432)"/><ellipse cx="70" cy="332" rx="6.0" ry="2.0" fill="#101214" transform="rotate(1 70 332)"/><ellipse cx="263" cy="279" rx="6.6" ry="5.8" fill="#c8d0d4" transform="rotate(62 263 279)"/><ellipse cx="229" cy="358" rx="7.1" ry="2.1" fill="#90989c" transform="rotate(172 229 358)"/><ellipse cx="127" cy="407" rx="5.7" ry="3.9" fill="#90989c" transform="rotate(95 127 407)"/><ellipse cx="261" cy="337" rx="12.8" ry="3.9" fill="#e8ecec" transform="rotate(175 261 337)"/><ellipse cx="180" cy="302" rx="8.1" ry="8.1" fill="#e8ecec" transform="rotate(120 180 302)"/><ellipse cx="230" cy="248" rx="10.7" ry="6.5" fill="#e8ecec" transform="rotate(10 230 248)"/><ellipse cx="107" cy="306" rx="7.8" ry="9.3" fill="#c8d0d4" transform="rotate(58 107 306)"/><ellipse cx="87" cy="336" rx="5.7" ry="2.2" fill="#c8d0d4" transform="rotate(12 87 336)"/><ellipse cx="281" cy="284" rx="6.2" ry="3.9" fill="#90989c" transform="rotate(164 281 284)"/><ellipse cx="137" cy="372" rx="7.4" ry="7.9" fill="#90989c" transform="rotate(42 137 372)"/><ellipse cx="223" cy="231" rx="4.8" ry="4.4" fill="#c8d0d4" transform="rotate(57 223 231)"/><ellipse cx="285" cy="254" rx="15.0" ry="4.5" fill="#e8ecec" transform="rotate(165 285 254)"/><ellipse cx="174" cy="317" rx="9.4" ry="2.9" fill="#e8ecec" transform="rotate(55 174 317)"/><ellipse cx="271" cy="431" rx="5.1" ry="5.6" fill="#e8ecec" transform="rotate(171 271 431)"/><ellipse cx="82" cy="403" rx="11.3" ry="4.9" fill="#90989c" transform="rotate(80 82 403)"/><ellipse cx="670" cy="325" rx="6.5" ry="5.9" fill="#101214" transform="rotate(35 670 325)"/><ellipse cx="635" cy="394" rx="4.2" ry="4.6" fill="#e8ecec" transform="rotate(66 635 394)"/><ellipse cx="620" cy="392" rx="8.2" ry="3.4" fill="#90989c" transform="rotate(119 620 392)"/><ellipse cx="666" cy="403" rx="6.1" ry="3.0" fill="#e8ecec" transform="rotate(142 666 403)"/><ellipse cx="580" cy="276" rx="9.1" ry="2.8" fill="#c8d0d4" transform="rotate(35 580 276)"/><ellipse cx="558" cy="325" rx="12.4" ry="3.3" fill="#0c0e10" transform="rotate(51 558 325)"/><ellipse cx="613" cy="314" rx="6.1" ry="3.9" fill="#0c0e10" transform="rotate(140 613 314)"/><ellipse cx="588" cy="270" rx="7.0" ry="6.4" fill="#101214" transform="rotate(143 588 270)"/><ellipse cx="592" cy="349" rx="13.0" ry="5.3" fill="#e8ecec" transform="rotate(170 592 349)"/><ellipse cx="679" cy="319" rx="4.8" ry="3.6" fill="#e8ecec" transform="rotate(2 679 319)"/><ellipse cx="705" cy="309" rx="11.4" ry="6.5" fill="#c8d0d4" transform="rotate(35 705 309)"/><ellipse cx="598" cy="350" rx="10.5" ry="5.2" fill="#c8d0d4" transform="rotate(53 598 350)"/><ellipse cx="563" cy="346" rx="6.4" ry="2.8" fill="#90989c" transform="rotate(146 563 346)"/><ellipse cx="562" cy="273" rx="5.9" ry="1.9" fill="#101214" transform="rotate(118 562 273)"/><ellipse cx="719" cy="419" rx="9.6" ry="5.2" fill="#e8ecec" transform="rotate(125 719 419)"/><ellipse cx="660" cy="325" rx="9.1" ry="2.7" fill="#c8d0d4" transform="rotate(110 660 325)"/><ellipse cx="722" cy="262" rx="8.6" ry="5.3" fill="#101214" transform="rotate(101 722 262)"/><ellipse cx="595" cy="430" rx="5.7" ry="2.4" fill="#e8ecec" transform="rotate(98 595 430)"/><ellipse cx="600" cy="308" rx="6.7" ry="1.7" fill="#101214" transform="rotate(135 600 308)"/><ellipse cx="585" cy="376" rx="6.0" ry="3.0" fill="#c8d0d4" transform="rotate(76 585 376)"/><ellipse cx="632" cy="295" rx="13.1" ry="3.3" fill="#e8ecec" transform="rotate(130 632 295)"/><ellipse cx="656" cy="300" rx="8.3" ry="8.1" fill="#101214" transform="rotate(158 656 300)"/><ellipse cx="641" cy="322" rx="9.5" ry="5.2" fill="#90989c" transform="rotate(145 641 322)"/><ellipse cx="625" cy="324" rx="11.1" ry="5.4" fill="#90989c" transform="rotate(100 625 324)"/><ellipse cx="659" cy="378" rx="10.2" ry="2.8" fill="#e8ecec" transform="rotate(178 659 378)"/><ellipse cx="651" cy="262" rx="6.1" ry="5.6" fill="#101214" transform="rotate(102 651 262)"/><ellipse cx="712" cy="262" rx="11.4" ry="4.9" fill="#101214" transform="rotate(85 712 262)"/><ellipse cx="718" cy="295" rx="5.7" ry="4.9" fill="#c8d0d4" transform="rotate(151 718 295)"/><ellipse cx="580" cy="342" rx="8.7" ry="5.1" fill="#0c0e10" transform="rotate(177 580 342)"/><ellipse cx="741" cy="371" rx="8.4" ry="2.1" fill="#e8ecec" transform="rotate(164 741 371)"/></g><g filter="url(#b2b)"><polygon points="250,170 500,120 570,190 330,260" fill="#2c3036"/><polygon points="270,165 500,120 530,150 300,205" fill="#3c4048"/><polygon points="330,262 570,192 580,215 345,285" fill="#0e1012"/><polygon points="560,40 680,100 720,230 640,240 560,130" fill="#2a2e34"/></g>
<g filter="url(#b2c)" fill="none" stroke-linecap="round" stroke-linejoin="round">
 <path d="M372 84 L 310 100 L 215 128 C 180 140, 178 200, 200 230 S 290 310, 350 330 S 380 380, 392 410" stroke="#e47a4c" stroke-width="13"/>
 <path d="M8 300 C 60 330, 100 300, 150 250" stroke="#b8c0c8" stroke-width="5"/>
 <path d="M90 350 C 120 420, 200 440, 260 430" stroke="#c8d0d8" stroke-width="5"/>
 <path d="M395 152 l 40 -8" stroke="#f0f0f0" stroke-width="9"/>
 <path d="M430 425 L 600 380" stroke="#b0b4b4" stroke-width="8"/>
</g>
<rect x="20" y="10" width="458" height="38" fill="#fff"/>

</g>
</svg>
<svg style="left:204.39px;top:248.74px" width="140.17" height="86.47" viewBox="8 10 804 496" preserveAspectRatio="none"><defs>
<filter id="b3a" x="-5%" y="-5%" width="110%" height="110%"><feGaussianBlur stdDeviation="12"/></filter>
<filter id="b3b" x="-5%" y="-5%" width="110%" height="110%"><feGaussianBlur stdDeviation="4.5"/></filter>
<filter id="b3c" x="-5%" y="-5%" width="110%" height="110%"><feGaussianBlur stdDeviation="2.5"/></filter>
<clipPath id="c3"><rect x="8" y="10" width="804" height="496"/></clipPath>
</defs>
<g clip-path="url(#c3)">
<rect x="8" y="10" width="804" height="496" fill="#103c78"/>
<g filter="url(#b3a)">
 <rect x="-10" y="40" width="340" height="75" fill="#10305c"/><rect x="-10" y="112" width="290" height="70" fill="#2288d0"/>
 <rect x="330" y="-10" width="520" height="55" fill="#c8d0d8"/>
 <rect x="540" y="62" width="320" height="115" fill="#24689f"/><rect x="400" y="34" width="460" height="30" fill="#0c2c54"/>
 <rect x="650" y="185" width="210" height="235" fill="#0c1a36"/>
 <rect x="-10" y="300" width="170" height="230" fill="#1262b2"/>
 <rect x="255" y="340" width="370" height="180" fill="#0c141c"/>
 <rect x="600" y="400" width="250" height="120" fill="#0c4488"/>
 <rect x="300" y="90" width="240" height="200" fill="#7c7a74"/>
 <rect x="130" y="170" width="160" height="120" fill="#202c3c"/>
</g>
<g filter="url(#b3b)">
 <ellipse cx="135" cy="135" rx="120" ry="28" fill="#3ca4e6"/><ellipse cx="130" cy="118" rx="95" ry="8" fill="#a4dcf8"/>
 <polygon points="8,44 340,42 330,100 8,108" fill="#0e2c58"/>
 <!-- tan battery -->
 <polygon points="8,185 100,175 135,290 8,300" fill="#c9aa6a"/>
 <polygon points="8,180 100,170 110,200 8,210" fill="#e0c890"/>
 <!-- chrome carb/engine -->
 <polygon points="320,105 420,90 515,112 495,215 335,235" fill="#a8a296"/>
 <polygon points="415,75 540,78 545,110 430,115" fill="#f0f0ec"/>
 <polygon points="330,160 480,140 490,200 340,220" fill="#8c8474"/>
 <polygon points="220,215 420,210 410,245 230,250" fill="#b8bcc0"/>
 <!-- blue cap -->
 <circle cx="542" cy="165" r="30" fill="#185ad8"/>
 <!-- right chrome valve cover -->
 <polygon points="440,250 650,205 670,250 480,320" fill="#ccd0d4"/>
 <polygon points="370,300 470,250 490,320 420,350" fill="#d8dcdc"/>
 <!-- headers -->
 <polygon points="440,370 640,290 660,340 470,430" fill="#a4a8ac"/>
 <polygon points="470,330 560,300 580,330 490,370" fill="#50545c"/>
 <!-- chrome cylinder left -->
 <polygon points="180,310 300,300 300,506 185,506" fill="#4c5c74"/>
 <rect x="232" y="315" width="26" height="190" fill="#d4dce6"/>
 <rect x="212" y="315" width="20" height="190" fill="#101828"/>
 <!-- dark center-left -->
 <polygon points="270,260 370,250 420,380 280,420" fill="#1c2430"/>
 <!-- right dark -->
 <polygon points="690,200 812,170 812,400 700,380" fill="#0a1830"/>
 <ellipse cx="763" cy="205" rx="36" ry="30" fill="#7ca0c8"/><ellipse cx="745" cy="290" rx="45" ry="50" fill="#142848"/>
 <!-- bottom left stripes -->
 <polygon points="8,330 60,320 160,506 90,506" fill="#2a84d4"/>
 <polygon points="8,400 8,506 70,506" fill="#0c3c7c"/>
 <!-- bottom-right blue -->
 <polygon points="590,506 812,380 812,506" fill="#0e52a0"/>
 <polygon points="640,506 812,410 812,440 700,506" fill="#2a7cc8"/>
 <!-- top-right stripes -->
 <polygon points="623,10 813,10 813,24 623,22" fill="#10141c"/><polygon points="413,80 543,76 543,112 420,116" fill="#f4f6f8"/>
 <!-- top dark band under label -->
 
</g>
<g id="spk3" filter="url(#b3c)" opacity=".85"><ellipse cx="303" cy="105" rx="11.6" ry="4.2" fill="#e4e0d4" transform="rotate(25 303 105)"/><ellipse cx="439" cy="237" rx="10.5" ry="2.7" fill="#f8f8f4" transform="rotate(6 439 237)"/><ellipse cx="336" cy="198" rx="10.0" ry="5.4" fill="#e4e0d4" transform="rotate(179 336 198)"/><ellipse cx="331" cy="249" rx="13.1" ry="7.9" fill="#6c685c" transform="rotate(37 331 249)"/><ellipse cx="395" cy="290" rx="6.6" ry="5.0" fill="#f8f8f4" transform="rotate(105 395 290)"/><ellipse cx="392" cy="125" rx="19.7" ry="4.9" fill="#a8a498" transform="rotate(5 392 125)"/><ellipse cx="469" cy="128" rx="16.5" ry="5.6" fill="#fff" transform="rotate(35 469 128)"/><ellipse cx="425" cy="138" rx="9.7" ry="4.1" fill="#181c20" transform="rotate(87 425 138)"/><ellipse cx="380" cy="119" rx="12.8" ry="5.6" fill="#e4e0d4" transform="rotate(121 380 119)"/><ellipse cx="506" cy="162" rx="17.6" ry="6.5" fill="#2a2a28" transform="rotate(51 506 162)"/><ellipse cx="469" cy="298" rx="8.0" ry="4.0" fill="#a8a498" transform="rotate(144 469 298)"/><ellipse cx="405" cy="91" rx="10.9" ry="7.5" fill="#e4e0d4" transform="rotate(157 405 91)"/><ellipse cx="342" cy="298" rx="5.3" ry="5.5" fill="#2a2a28" transform="rotate(110 342 298)"/><ellipse cx="427" cy="210" rx="14.4" ry="6.9" fill="#a8a498" transform="rotate(144 427 210)"/><ellipse cx="366" cy="248" rx="14.1" ry="8.4" fill="#6c685c" transform="rotate(2 366 248)"/><ellipse cx="451" cy="178" rx="11.5" ry="10.3" fill="#f8f8f4" transform="rotate(102 451 178)"/><ellipse cx="505" cy="288" rx="16.8" ry="6.0" fill="#6c685c" transform="rotate(100 505 288)"/><ellipse cx="359" cy="123" rx="10.5" ry="6.7" fill="#181c20" transform="rotate(147 359 123)"/><ellipse cx="335" cy="107" rx="16.5" ry="5.5" fill="#6c685c" transform="rotate(170 335 107)"/><ellipse cx="451" cy="117" rx="10.4" ry="9.6" fill="#c8c0b0" transform="rotate(76 451 117)"/><ellipse cx="364" cy="274" rx="10.8" ry="3.0" fill="#fff" transform="rotate(55 364 274)"/><ellipse cx="539" cy="139" rx="10.1" ry="11.1" fill="#2a2a28" transform="rotate(85 539 139)"/><ellipse cx="367" cy="124" rx="12.8" ry="7.4" fill="#a8a498" transform="rotate(72 367 124)"/><ellipse cx="400" cy="124" rx="7.5" ry="4.5" fill="#181c20" transform="rotate(126 400 124)"/><ellipse cx="329" cy="128" rx="20.2" ry="5.7" fill="#a8a498" transform="rotate(125 329 128)"/><ellipse cx="418" cy="223" rx="11.9" ry="6.4" fill="#c8c0b0" transform="rotate(12 418 223)"/><ellipse cx="377" cy="184" rx="4.0" ry="4.8" fill="#2a2a28" transform="rotate(68 377 184)"/><ellipse cx="378" cy="281" rx="11.1" ry="6.0" fill="#fff" transform="rotate(140 378 281)"/><ellipse cx="362" cy="111" rx="15.0" ry="4.9" fill="#fff" transform="rotate(153 362 111)"/><ellipse cx="428" cy="147" rx="14.5" ry="3.8" fill="#6c685c" transform="rotate(47 428 147)"/><ellipse cx="403" cy="127" rx="17.9" ry="5.8" fill="#fff" transform="rotate(9 403 127)"/><ellipse cx="521" cy="170" rx="12.6" ry="8.6" fill="#f8f8f4" transform="rotate(19 521 170)"/><ellipse cx="385" cy="240" rx="13.0" ry="6.8" fill="#2a2a28" transform="rotate(138 385 240)"/><ellipse cx="381" cy="90" rx="10.6" ry="4.7" fill="#c8c0b0" transform="rotate(79 381 90)"/><ellipse cx="320" cy="189" rx="9.1" ry="6.2" fill="#f8f8f4" transform="rotate(137 320 189)"/><ellipse cx="534" cy="262" rx="11.8" ry="7.1" fill="#e4e0d4" transform="rotate(30 534 262)"/><ellipse cx="421" cy="159" rx="14.1" ry="7.8" fill="#6c685c" transform="rotate(157 421 159)"/><ellipse cx="353" cy="128" rx="8.9" ry="2.6" fill="#6c685c" transform="rotate(80 353 128)"/><ellipse cx="417" cy="168" rx="16.8" ry="5.7" fill="#181c20" transform="rotate(164 417 168)"/><ellipse cx="411" cy="202" rx="13.4" ry="6.8" fill="#2a2a28" transform="rotate(25 411 202)"/><ellipse cx="527" cy="272" rx="6.9" ry="3.9" fill="#181c20" transform="rotate(41 527 272)"/><ellipse cx="389" cy="282" rx="17.3" ry="5.2" fill="#6c685c" transform="rotate(108 389 282)"/><ellipse cx="389" cy="121" rx="7.0" ry="4.9" fill="#c8c0b0" transform="rotate(163 389 121)"/><ellipse cx="330" cy="267" rx="11.3" ry="7.2" fill="#a8a498" transform="rotate(120 330 267)"/><ellipse cx="412" cy="97" rx="9.0" ry="2.8" fill="#a8a498" transform="rotate(98 412 97)"/><ellipse cx="424" cy="112" rx="7.9" ry="6.7" fill="#181c20" transform="rotate(46 424 112)"/><ellipse cx="382" cy="266" rx="14.1" ry="4.5" fill="#fff" transform="rotate(22 382 266)"/><ellipse cx="443" cy="210" rx="11.3" ry="7.8" fill="#6c685c" transform="rotate(98 443 210)"/><ellipse cx="455" cy="199" rx="19.8" ry="5.1" fill="#e4e0d4" transform="rotate(47 455 199)"/><ellipse cx="468" cy="117" rx="9.5" ry="8.3" fill="#c8c0b0" transform="rotate(173 468 117)"/><ellipse cx="411" cy="293" rx="8.1" ry="3.7" fill="#181c20" transform="rotate(123 411 293)"/><ellipse cx="508" cy="187" rx="8.2" ry="4.0" fill="#181c20" transform="rotate(2 508 187)"/><ellipse cx="472" cy="121" rx="9.8" ry="2.8" fill="#e4e0d4" transform="rotate(29 472 121)"/><ellipse cx="492" cy="210" rx="12.3" ry="3.6" fill="#e4e0d4" transform="rotate(142 492 210)"/><ellipse cx="496" cy="279" rx="15.0" ry="4.6" fill="#f8f8f4" transform="rotate(12 496 279)"/><ellipse cx="511" cy="267" rx="7.4" ry="6.0" fill="#6c685c" transform="rotate(13 511 267)"/><ellipse cx="408" cy="193" rx="14.5" ry="7.9" fill="#e4e0d4" transform="rotate(18 408 193)"/><ellipse cx="405" cy="193" rx="5.2" ry="5.7" fill="#c8c0b0" transform="rotate(13 405 193)"/><ellipse cx="403" cy="143" rx="16.2" ry="5.5" fill="#fff" transform="rotate(18 403 143)"/><ellipse cx="365" cy="271" rx="16.1" ry="4.3" fill="#6c685c" transform="rotate(65 365 271)"/><ellipse cx="411" cy="298" rx="17.1" ry="4.4" fill="#fff" transform="rotate(128 411 298)"/><ellipse cx="540" cy="205" rx="8.9" ry="3.2" fill="#e4e0d4" transform="rotate(117 540 205)"/><ellipse cx="533" cy="142" rx="6.5" ry="4.8" fill="#2a2a28" transform="rotate(82 533 142)"/><ellipse cx="422" cy="160" rx="9.6" ry="3.6" fill="#2a2a28" transform="rotate(119 422 160)"/><ellipse cx="552" cy="183" rx="12.0" ry="6.9" fill="#f8f8f4" transform="rotate(78 552 183)"/><ellipse cx="438" cy="211" rx="13.5" ry="7.1" fill="#a8a498" transform="rotate(92 438 211)"/><ellipse cx="428" cy="196" rx="7.3" ry="8.8" fill="#f8f8f4" transform="rotate(91 428 196)"/><ellipse cx="373" cy="294" rx="8.8" ry="4.4" fill="#fff" transform="rotate(29 373 294)"/><ellipse cx="402" cy="231" rx="11.2" ry="10.1" fill="#2a2a28" transform="rotate(118 402 231)"/><ellipse cx="389" cy="137" rx="12.3" ry="3.1" fill="#f8f8f4" transform="rotate(155 389 137)"/><ellipse cx="300" cy="311" rx="12.7" ry="3.5" fill="#1c2838" transform="rotate(89 300 311)"/><ellipse cx="285" cy="338" rx="6.7" ry="7.1" fill="#0c1018" transform="rotate(124 285 338)"/><ellipse cx="565" cy="290" rx="7.6" ry="2.6" fill="#707880" transform="rotate(152 565 290)"/><ellipse cx="382" cy="482" rx="10.0" ry="6.1" fill="#141c28" transform="rotate(6 382 482)"/><ellipse cx="314" cy="298" rx="4.4" ry="4.7" fill="#fff" transform="rotate(7 314 298)"/><ellipse cx="358" cy="372" rx="14.5" ry="6.9" fill="#707880" transform="rotate(96 358 372)"/><ellipse cx="558" cy="396" rx="15.5" ry="5.0" fill="#b0b4b8" transform="rotate(106 558 396)"/><ellipse cx="383" cy="427" rx="9.7" ry="11.3" fill="#b0b4b8" transform="rotate(32 383 427)"/><ellipse cx="544" cy="282" rx="8.0" ry="3.0" fill="#fff" transform="rotate(9 544 282)"/><ellipse cx="500" cy="378" rx="12.3" ry="5.5" fill="#fff" transform="rotate(59 500 378)"/><ellipse cx="606" cy="408" rx="12.4" ry="5.7" fill="#0c1018" transform="rotate(41 606 408)"/><ellipse cx="496" cy="349" rx="21.1" ry="5.5" fill="#1c2838" transform="rotate(23 496 349)"/><ellipse cx="591" cy="415" rx="6.4" ry="4.6" fill="#e0e4e8" transform="rotate(0 591 415)"/><ellipse cx="603" cy="300" rx="19.3" ry="6.2" fill="#b0b4b8" transform="rotate(75 603 300)"/><ellipse cx="394" cy="300" rx="7.2" ry="7.2" fill="#707880" transform="rotate(128 394 300)"/><ellipse cx="352" cy="447" rx="12.8" ry="6.1" fill="#0c1018" transform="rotate(163 352 447)"/><ellipse cx="306" cy="444" rx="16.9" ry="4.8" fill="#e0e4e8" transform="rotate(159 306 444)"/><ellipse cx="614" cy="433" rx="16.7" ry="5.5" fill="#e0e4e8" transform="rotate(68 614 433)"/><ellipse cx="426" cy="306" rx="10.2" ry="8.7" fill="#e0e4e8" transform="rotate(112 426 306)"/><ellipse cx="369" cy="392" rx="5.4" ry="5.3" fill="#141c28" transform="rotate(159 369 392)"/><ellipse cx="357" cy="423" rx="11.3" ry="4.3" fill="#b0b4b8" transform="rotate(55 357 423)"/><ellipse cx="657" cy="381" rx="5.5" ry="4.4" fill="#e0e4e8" transform="rotate(178 657 381)"/><ellipse cx="366" cy="336" rx="14.5" ry="6.7" fill="#e0e4e8" transform="rotate(33 366 336)"/><ellipse cx="512" cy="348" rx="6.7" ry="3.1" fill="#b0b4b8" transform="rotate(135 512 348)"/><ellipse cx="312" cy="424" rx="10.8" ry="8.0" fill="#e0e4e8" transform="rotate(102 312 424)"/><ellipse cx="518" cy="385" rx="6.5" ry="4.4" fill="#b0b4b8" transform="rotate(37 518 385)"/><ellipse cx="389" cy="418" rx="18.7" ry="5.6" fill="#0c1018" transform="rotate(7 389 418)"/><ellipse cx="375" cy="297" rx="12.6" ry="6.1" fill="#e0e4e8" transform="rotate(96 375 297)"/><ellipse cx="281" cy="349" rx="11.0" ry="9.7" fill="#fff" transform="rotate(174 281 349)"/><ellipse cx="445" cy="296" rx="14.3" ry="7.6" fill="#e0e4e8" transform="rotate(15 445 296)"/><ellipse cx="582" cy="406" rx="8.7" ry="8.8" fill="#fff" transform="rotate(177 582 406)"/><ellipse cx="417" cy="474" rx="11.0" ry="4.7" fill="#707880" transform="rotate(101 417 474)"/><ellipse cx="462" cy="354" rx="20.4" ry="5.9" fill="#fff" transform="rotate(129 462 354)"/><ellipse cx="406" cy="404" rx="17.9" ry="6.1" fill="#141c28" transform="rotate(113 406 404)"/><ellipse cx="281" cy="347" rx="16.3" ry="4.8" fill="#fff" transform="rotate(104 281 347)"/><ellipse cx="298" cy="407" rx="13.2" ry="8.9" fill="#1c2838" transform="rotate(121 298 407)"/><ellipse cx="318" cy="356" rx="7.1" ry="7.4" fill="#e0e4e8" transform="rotate(99 318 356)"/><ellipse cx="406" cy="360" rx="10.5" ry="8.7" fill="#e0e4e8" transform="rotate(113 406 360)"/><ellipse cx="592" cy="388" rx="10.0" ry="3.2" fill="#1c2838" transform="rotate(147 592 388)"/><ellipse cx="513" cy="300" rx="7.5" ry="3.8" fill="#b0b4b8" transform="rotate(98 513 300)"/><ellipse cx="343" cy="413" rx="11.8" ry="5.1" fill="#e0e4e8" transform="rotate(170 343 413)"/><ellipse cx="586" cy="303" rx="14.3" ry="8.7" fill="#707880" transform="rotate(94 586 303)"/><ellipse cx="326" cy="376" rx="16.1" ry="8.4" fill="#0c1018" transform="rotate(17 326 376)"/><ellipse cx="549" cy="313" rx="13.1" ry="4.8" fill="#141c28" transform="rotate(83 549 313)"/><ellipse cx="347" cy="371" rx="7.0" ry="5.1" fill="#b0b4b8" transform="rotate(133 347 371)"/><ellipse cx="429" cy="338" rx="16.1" ry="8.0" fill="#707880" transform="rotate(15 429 338)"/><ellipse cx="377" cy="358" rx="7.1" ry="3.7" fill="#e0e4e8" transform="rotate(92 377 358)"/><ellipse cx="288" cy="352" rx="14.2" ry="4.1" fill="#b0b4b8" transform="rotate(8 288 352)"/><ellipse cx="638" cy="443" rx="7.3" ry="6.5" fill="#1c2838" transform="rotate(88 638 443)"/><ellipse cx="599" cy="446" rx="13.5" ry="8.8" fill="#707880" transform="rotate(124 599 446)"/><ellipse cx="528" cy="380" rx="5.8" ry="4.5" fill="#1c2838" transform="rotate(169 528 380)"/><ellipse cx="532" cy="275" rx="5.8" ry="5.9" fill="#e0e4e8" transform="rotate(49 532 275)"/><ellipse cx="506" cy="353" rx="16.4" ry="7.6" fill="#b0b4b8" transform="rotate(81 506 353)"/><ellipse cx="584" cy="369" rx="6.3" ry="7.2" fill="#b0b4b8" transform="rotate(54 584 369)"/><ellipse cx="346" cy="366" rx="14.7" ry="3.9" fill="#1c2838" transform="rotate(36 346 366)"/><ellipse cx="556" cy="334" rx="15.1" ry="5.6" fill="#b0b4b8" transform="rotate(13 556 334)"/><ellipse cx="472" cy="405" rx="20.9" ry="6.6" fill="#b0b4b8" transform="rotate(39 472 405)"/><ellipse cx="390" cy="401" rx="16.3" ry="6.9" fill="#b0b4b8" transform="rotate(13 390 401)"/><ellipse cx="600" cy="280" rx="8.3" ry="3.2" fill="#e0e4e8" transform="rotate(130 600 280)"/><ellipse cx="414" cy="409" rx="12.1" ry="10.4" fill="#fff" transform="rotate(43 414 409)"/><ellipse cx="704" cy="271" rx="16.5" ry="11.1" fill="#5c94d0" transform="rotate(117 704 271)"/><ellipse cx="789" cy="115" rx="18.9" ry="7.5" fill="#5c94d0" transform="rotate(91 789 115)"/><ellipse cx="681" cy="149" rx="12.0" ry="12.2" fill="#5c94d0" transform="rotate(74 681 149)"/><ellipse cx="685" cy="68" rx="19.7" ry="6.7" fill="#3a78bc" transform="rotate(77 685 68)"/><ellipse cx="794" cy="244" rx="12.7" ry="11.7" fill="#3a78bc" transform="rotate(10 794 244)"/><ellipse cx="811" cy="397" rx="8.1" ry="4.7" fill="#0a1c38" transform="rotate(118 811 397)"/><ellipse cx="689" cy="162" rx="14.7" ry="5.5" fill="#08142a" transform="rotate(100 689 162)"/><ellipse cx="607" cy="89" rx="10.8" ry="3.1" fill="#5c94d0" transform="rotate(135 607 89)"/><ellipse cx="775" cy="72" rx="11.5" ry="3.6" fill="#08142a" transform="rotate(1 775 72)"/><ellipse cx="629" cy="121" rx="12.0" ry="4.5" fill="#08142a" transform="rotate(82 629 121)"/><ellipse cx="759" cy="256" rx="18.5" ry="5.4" fill="#1c4c8c" transform="rotate(87 759 256)"/><ellipse cx="681" cy="183" rx="13.6" ry="12.7" fill="#1c4c8c" transform="rotate(157 681 183)"/><ellipse cx="796" cy="272" rx="23.6" ry="6.7" fill="#0a1c38" transform="rotate(152 796 272)"/><ellipse cx="789" cy="305" rx="17.1" ry="6.1" fill="#3a78bc" transform="rotate(159 789 305)"/><ellipse cx="677" cy="198" rx="12.6" ry="8.7" fill="#08142a" transform="rotate(158 677 198)"/><ellipse cx="658" cy="316" rx="16.9" ry="4.4" fill="#0a1c38" transform="rotate(30 658 316)"/><ellipse cx="791" cy="162" rx="28.4" ry="7.8" fill="#3a78bc" transform="rotate(31 791 162)"/><ellipse cx="769" cy="202" rx="25.9" ry="7.0" fill="#5c94d0" transform="rotate(156 769 202)"/><ellipse cx="726" cy="62" rx="24.3" ry="6.8" fill="#08142a" transform="rotate(2 726 62)"/><ellipse cx="707" cy="251" rx="8.3" ry="6.6" fill="#1c4c8c" transform="rotate(171 707 251)"/><ellipse cx="693" cy="180" rx="15.1" ry="12.9" fill="#1c4c8c" transform="rotate(4 693 180)"/><ellipse cx="765" cy="98" rx="5.5" ry="6.3" fill="#5c94d0" transform="rotate(141 765 98)"/><ellipse cx="617" cy="89" rx="16.3" ry="5.1" fill="#3a78bc" transform="rotate(133 617 89)"/><ellipse cx="804" cy="314" rx="12.8" ry="14.7" fill="#3a78bc" transform="rotate(1 804 314)"/><ellipse cx="716" cy="164" rx="8.6" ry="5.3" fill="#08142a" transform="rotate(61 716 164)"/><ellipse cx="749" cy="145" rx="20.9" ry="9.4" fill="#3a78bc" transform="rotate(151 749 145)"/><ellipse cx="697" cy="211" rx="13.8" ry="10.1" fill="#1c4c8c" transform="rotate(4 697 211)"/><ellipse cx="598" cy="115" rx="14.9" ry="10.9" fill="#1c4c8c" transform="rotate(111 598 115)"/><ellipse cx="685" cy="260" rx="21.8" ry="5.7" fill="#1c4c8c" transform="rotate(48 685 260)"/><ellipse cx="632" cy="188" rx="5.8" ry="5.7" fill="#0a1c38" transform="rotate(148 632 188)"/><ellipse cx="723" cy="385" rx="15.7" ry="4.9" fill="#0a1c38" transform="rotate(7 723 385)"/><ellipse cx="729" cy="95" rx="13.5" ry="3.7" fill="#1c4c8c" transform="rotate(111 729 95)"/><ellipse cx="773" cy="224" rx="24.6" ry="7.0" fill="#3a78bc" transform="rotate(147 773 224)"/><ellipse cx="631" cy="185" rx="11.9" ry="6.2" fill="#08142a" transform="rotate(106 631 185)"/><ellipse cx="762" cy="205" rx="9.6" ry="9.2" fill="#0a1c38" transform="rotate(138 762 205)"/><ellipse cx="586" cy="115" rx="16.7" ry="4.6" fill="#0a1c38" transform="rotate(150 586 115)"/><ellipse cx="751" cy="84" rx="10.1" ry="4.6" fill="#5c94d0" transform="rotate(163 751 84)"/><ellipse cx="686" cy="328" rx="9.6" ry="9.3" fill="#08142a" transform="rotate(102 686 328)"/><ellipse cx="656" cy="255" rx="26.6" ry="6.6" fill="#5c94d0" transform="rotate(89 656 255)"/><ellipse cx="775" cy="113" rx="21.0" ry="10.9" fill="#0a1c38" transform="rotate(107 775 113)"/><ellipse cx="162" cy="142" rx="46.9" ry="5.3" fill="#64b4ec" transform="rotate(159 162 142)"/><ellipse cx="287" cy="69" rx="28.8" ry="10.1" fill="#0c4c94" transform="rotate(105 287 69)"/><ellipse cx="36" cy="109" rx="8.3" ry="5.2" fill="#2c88d4" transform="rotate(94 36 109)"/><ellipse cx="116" cy="164" rx="15.0" ry="13.6" fill="#0c4c94" transform="rotate(70 116 164)"/><ellipse cx="180" cy="149" rx="15.9" ry="6.0" fill="#0c4c94" transform="rotate(37 180 149)"/><ellipse cx="185" cy="140" rx="20.4" ry="5.8" fill="#2c88d4" transform="rotate(45 185 140)"/><ellipse cx="178" cy="165" rx="24.0" ry="10.0" fill="#64b4ec" transform="rotate(21 178 165)"/><ellipse cx="275" cy="88" rx="22.9" ry="3.1" fill="#0a3a74" transform="rotate(163 275 88)"/><ellipse cx="261" cy="73" rx="46.3" ry="4.7" fill="#0a3a74" transform="rotate(76 261 73)"/><ellipse cx="114" cy="122" rx="10.3" ry="6.4" fill="#64b4ec" transform="rotate(56 114 122)"/><ellipse cx="159" cy="142" rx="29.9" ry="3.2" fill="#64b4ec" transform="rotate(73 159 142)"/><ellipse cx="231" cy="189" rx="25.0" ry="8.4" fill="#0a3a74" transform="rotate(134 231 189)"/><ellipse cx="27" cy="163" rx="16.9" ry="6.2" fill="#0a3a74" transform="rotate(139 27 163)"/><ellipse cx="108" cy="111" rx="29.3" ry="3.2" fill="#64b4ec" transform="rotate(111 108 111)"/><ellipse cx="158" cy="170" rx="9.9" ry="7.1" fill="#2c88d4" transform="rotate(47 158 170)"/><ellipse cx="259" cy="137" rx="22.2" ry="10.0" fill="#0c4c94" transform="rotate(125 259 137)"/><ellipse cx="145" cy="85" rx="35.6" ry="5.3" fill="#0c4c94" transform="rotate(68 145 85)"/><ellipse cx="40" cy="106" rx="10.2" ry="7.0" fill="#0a3a74" transform="rotate(134 40 106)"/><ellipse cx="214" cy="180" rx="42.1" ry="5.1" fill="#0a3a74" transform="rotate(109 214 180)"/><ellipse cx="15" cy="175" rx="31.5" ry="5.7" fill="#2c88d4" transform="rotate(30 15 175)"/><ellipse cx="251" cy="123" rx="26.2" ry="3.1" fill="#64b4ec" transform="rotate(172 251 123)"/><ellipse cx="138" cy="97" rx="33.2" ry="4.8" fill="#0c4c94" transform="rotate(120 138 97)"/><ellipse cx="219" cy="149" rx="21.6" ry="9.0" fill="#0a3a74" transform="rotate(158 219 149)"/><ellipse cx="150" cy="180" rx="21.0" ry="4.6" fill="#2c88d4" transform="rotate(94 150 180)"/><ellipse cx="282" cy="108" rx="24.1" ry="9.5" fill="#64b4ec" transform="rotate(159 282 108)"/><ellipse cx="223" cy="270" rx="15.8" ry="4.6" fill="#0c1018" transform="rotate(51 223 270)"/><ellipse cx="226" cy="270" rx="16.4" ry="4.4" fill="#0c1018" transform="rotate(49 226 270)"/><ellipse cx="267" cy="290" rx="9.7" ry="9.3" fill="#c8b078" transform="rotate(2 267 290)"/><ellipse cx="194" cy="183" rx="7.8" ry="8.3" fill="#0c1018" transform="rotate(42 194 183)"/><ellipse cx="143" cy="221" rx="10.7" ry="5.2" fill="#0c1018" transform="rotate(65 143 221)"/><ellipse cx="157" cy="189" rx="14.1" ry="6.2" fill="#1c2838" transform="rotate(148 157 189)"/><ellipse cx="185" cy="254" rx="8.1" ry="2.6" fill="#1c2838" transform="rotate(139 185 254)"/><ellipse cx="216" cy="271" rx="16.9" ry="5.1" fill="#c8b078" transform="rotate(121 216 271)"/><ellipse cx="211" cy="189" rx="7.5" ry="5.8" fill="#e0e4e8" transform="rotate(70 211 189)"/><ellipse cx="174" cy="250" rx="9.9" ry="3.1" fill="#e0e4e8" transform="rotate(146 174 250)"/><ellipse cx="293" cy="190" rx="8.4" ry="3.0" fill="#1c2838" transform="rotate(4 293 190)"/><ellipse cx="234" cy="181" rx="12.6" ry="3.8" fill="#c8b078" transform="rotate(30 234 181)"/><ellipse cx="180" cy="233" rx="6.4" ry="6.7" fill="#c8b078" transform="rotate(70 180 233)"/><ellipse cx="255" cy="213" rx="9.2" ry="5.5" fill="#1c2838" transform="rotate(87 255 213)"/><ellipse cx="283" cy="192" rx="8.7" ry="8.6" fill="#0c1018" transform="rotate(101 283 192)"/><ellipse cx="254" cy="298" rx="12.8" ry="7.2" fill="#c8b078" transform="rotate(81 254 298)"/><ellipse cx="241" cy="192" rx="14.8" ry="4.6" fill="#c8b078" transform="rotate(67 241 192)"/><ellipse cx="158" cy="235" rx="10.4" ry="3.1" fill="#90989c" transform="rotate(55 158 235)"/><ellipse cx="202" cy="187" rx="9.6" ry="4.1" fill="#c8b078" transform="rotate(5 202 187)"/><ellipse cx="268" cy="263" rx="12.7" ry="4.0" fill="#e0e4e8" transform="rotate(158 268 263)"/><ellipse cx="287" cy="265" rx="9.8" ry="3.3" fill="#1c2838" transform="rotate(98 287 265)"/><ellipse cx="260" cy="209" rx="7.0" ry="3.8" fill="#90989c" transform="rotate(46 260 209)"/><ellipse cx="256" cy="273" rx="13.5" ry="6.8" fill="#1c2838" transform="rotate(34 256 273)"/><ellipse cx="147" cy="299" rx="8.3" ry="6.4" fill="#c8b078" transform="rotate(126 147 299)"/><ellipse cx="281" cy="268" rx="10.8" ry="7.5" fill="#90989c" transform="rotate(133 281 268)"/></g>
<g filter="url(#b3c)" fill="none" stroke-linecap="round">
 <path d="M620 120 C 660 160, 700 150, 760 130" stroke="#081830" stroke-width="12"/>
 <path d="M330 130 l 150 -15 M340 180 l 140 -20" stroke="#ece4d4" stroke-width="9"/>
 <path d="M350 155 l 130 -15" stroke="#4c4438" stroke-width="8"/>
 <path d="M500 350 l 120 -50 M520 390 l 110 -50" stroke="#d0d4d8" stroke-width="9"/>
</g>
<rect x="15" y="12" width="325" height="28" fill="#fff"/>

</g>
</svg>
<svg style="left:204.39px;top:339.62px" width="140.17" height="87.52" viewBox="8 15 804 502" preserveAspectRatio="none"><defs>
<filter id="b4a" x="-5%" y="-5%" width="110%" height="110%"><feGaussianBlur stdDeviation="12"/></filter>
<filter id="b4b" x="-5%" y="-5%" width="110%" height="110%"><feGaussianBlur stdDeviation="4.5"/></filter>
<filter id="b4c" x="-5%" y="-5%" width="110%" height="110%"><feGaussianBlur stdDeviation="2.5"/></filter>
<clipPath id="c4"><rect x="8" y="15" width="804" height="502"/></clipPath>
</defs>
<g clip-path="url(#c4)">
<rect x="8" y="15" width="804" height="502" fill="#3a3e46"/>
<g filter="url(#b4a)">
 <rect x="-10" y="40" width="110" height="100" fill="#7c5c4a"/>
 <rect x="340" y="0" width="310" height="50" fill="#6a9c94"/>
 <rect x="700" y="0" width="150" height="150" fill="#2c2018"/>
 <rect x="100" y="45" width="620" height="110" fill="#1a1e26"/>
 <rect x="-10" y="120" width="55" height="420" fill="#9aa2aa"/>
 <rect x="770" y="250" width="80" height="200" fill="#22262e"/>
 <rect x="80" y="150" width="640" height="200" fill="#4a4e54"/>
 <rect x="60" y="350" width="720" height="180" fill="#3c424c"/>
 <rect x="520" y="160" width="200" height="100" fill="#22262c"/>
</g>
<g filter="url(#b4b)">
 <!-- hood underside curve -->
 <path d="M95 60 Q 410 20 730 60 L 700 150 Q 410 110 130 150 Z" fill="#171a20"/>
 <path d="M130 95 Q 410 55 700 95 L 700 110 Q 410 72 130 112 Z" fill="#343842"/>
 <!-- body sides -->
 <path d="M8 150 Q 55 120 95 75 L 106 100 Q 40 220 30 517 L 8 517 Z" fill="#a4acb4"/>
 <path d="M733 62 L 755 58 Q 800 150 815 250 L 790 260 Q 780 170 733 62 Z" fill="#b0b8ba"/>
 <path d="M32 240 Q 22 400 35 517 L 62 517 Q 50 400 66 220 Z" fill="#444a54"/>
 <!-- engine cover -->
 <polygon points="220,205 430,195 445,280 225,290" fill="#8a8e92"/>
 <polygon points="235,215 420,207 425,240 238,250" fill="#9ca0a4"/>
 <!-- runners -->
 <polygon points="230,295 405,290 400,350 240,352" fill="#b2b6ba"/>
 <rect x="262" y="295" width="18" height="55" fill="#50545a"/>
 <rect x="310" y="295" width="18" height="55" fill="#50545a"/>
 <rect x="358" y="295" width="18" height="55" fill="#50545a"/>
 <!-- left parts -->
 <polygon points="90,160 215,150 220,340 80,350" fill="#60646a"/>
 <ellipse cx="160" cy="185" rx="40" ry="22" fill="#b8bcc0"/>
 <circle cx="105" cy="215" r="20" fill="#2aa4ae"/>
 <ellipse cx="110" cy="300" rx="40" ry="45" fill="#3a3e44"/>
 <ellipse cx="150" cy="320" rx="30" ry="25" fill="#a0a4a8"/>
 <!-- right parts -->
 <polygon points="450,190 640,170 700,260 470,340" fill="#2c3036"/>
 <ellipse cx="560" cy="260" rx="60" ry="30" fill="#585c64"/>
 <rect x="595" y="290" width="52" height="32" fill="#e23a2a"/>
 <polygon points="640,290 770,300 775,350 650,352" fill="#a4a8ac"/>
 <polygon points="650,150 730,170 740,260 680,250" fill="#1c1f26"/>
 <ellipse cx="690" cy="150" rx="35" ry="15" fill="#b0b4b8"/>
 <!-- hoses -->
 <polygon points="430,240 470,200 490,215 450,330 410,340" fill="#16181c"/>
 <!-- radiator support -->
 <polygon points="60,355 780,355 790,400 50,400" fill="#4c525e"/>
 <polygon points="50,400 790,400 800,517 40,517" fill="#383e48"/>
 <polygon points="370,385 450,385 455,517 365,517" fill="#1e2228"/>
 <rect x="395" y="420" width="30" height="60" fill="#5a606a"/>
 <polygon points="230,440 350,440 350,517 230,517" fill="#30353e"/>
 <polygon points="470,440 600,440 600,517 470,517" fill="#30353e"/>
 <!-- bottom corners -->
 <polygon points="8,450 50,470 60,517 8,517" fill="#ccd0d4"/>
 <polygon points="812,450 785,460 778,517 812,517" fill="#b0b4b8"/>
 <!-- top pieces -->
 <polygon points="8,50 95,50 80,130 8,140" fill="#82604c"/>
 <polygon points="760,18 812,18 812,135 775,100" fill="#3e2a1c"/><polygon points="648,15 763,15 770,90 700,60 648,45" fill="#16130f"/>
 <polygon points="350,15 648,15 648,44 350,47" fill="#5e9890"/>
 
</g>
<g id="spk4" filter="url(#b4c)" opacity=".8"><ellipse cx="331" cy="196" rx="10.8" ry="3.0" fill="#888c94" transform="rotate(104 331 196)"/><ellipse cx="453" cy="227" rx="15.4" ry="6.5" fill="#14161a" transform="rotate(141 453 227)"/><ellipse cx="372" cy="181" rx="9.4" ry="3.2" fill="#14161a" transform="rotate(30 372 181)"/><ellipse cx="145" cy="268" rx="9.4" ry="6.3" fill="#1c2026" transform="rotate(132 145 268)"/><ellipse cx="576" cy="296" rx="8.8" ry="3.2" fill="#0c0e12" transform="rotate(22 576 296)"/><ellipse cx="549" cy="346" rx="6.0" ry="3.8" fill="#0c0e12" transform="rotate(112 549 346)"/><ellipse cx="369" cy="309" rx="6.5" ry="3.6" fill="#1c2026" transform="rotate(19 369 309)"/><ellipse cx="349" cy="283" rx="11.0" ry="6.1" fill="#0c0e12" transform="rotate(4 349 283)"/><ellipse cx="115" cy="339" rx="11.2" ry="5.0" fill="#14161a" transform="rotate(50 115 339)"/><ellipse cx="685" cy="281" rx="7.3" ry="6.4" fill="#14161a" transform="rotate(12 685 281)"/><ellipse cx="571" cy="286" rx="20.0" ry="6.0" fill="#0c0e12" transform="rotate(178 571 286)"/><ellipse cx="695" cy="233" rx="9.9" ry="9.8" fill="#1c2026" transform="rotate(95 695 233)"/><ellipse cx="371" cy="297" rx="13.1" ry="7.0" fill="#888c94" transform="rotate(81 371 297)"/><ellipse cx="445" cy="336" rx="8.3" ry="4.7" fill="#e0e2e6" transform="rotate(127 445 336)"/><ellipse cx="619" cy="209" rx="7.8" ry="7.8" fill="#50545c" transform="rotate(99 619 209)"/><ellipse cx="82" cy="186" rx="9.3" ry="9.7" fill="#0c0e12" transform="rotate(43 82 186)"/><ellipse cx="410" cy="174" rx="12.5" ry="4.3" fill="#2c3038" transform="rotate(148 410 174)"/><ellipse cx="485" cy="293" rx="12.6" ry="5.9" fill="#888c94" transform="rotate(175 485 293)"/><ellipse cx="644" cy="156" rx="17.3" ry="4.6" fill="#0c0e12" transform="rotate(115 644 156)"/><ellipse cx="352" cy="345" rx="11.3" ry="12.3" fill="#b8bcc2" transform="rotate(120 352 345)"/><ellipse cx="212" cy="230" rx="22.6" ry="5.9" fill="#888c94" transform="rotate(51 212 230)"/><ellipse cx="666" cy="272" rx="20.0" ry="5.8" fill="#e0e2e6" transform="rotate(50 666 272)"/><ellipse cx="275" cy="309" rx="11.4" ry="8.2" fill="#2c3038" transform="rotate(90 275 309)"/><ellipse cx="225" cy="186" rx="8.0" ry="8.1" fill="#e0e2e6" transform="rotate(89 225 186)"/><ellipse cx="99" cy="315" rx="16.7" ry="5.8" fill="#50545c" transform="rotate(5 99 315)"/><ellipse cx="353" cy="250" rx="17.7" ry="7.4" fill="#14161a" transform="rotate(77 353 250)"/><ellipse cx="217" cy="325" rx="9.0" ry="7.7" fill="#e0e2e6" transform="rotate(118 217 325)"/><ellipse cx="79" cy="315" rx="6.1" ry="6.9" fill="#50545c" transform="rotate(138 79 315)"/><ellipse cx="334" cy="187" rx="13.1" ry="5.4" fill="#2c3038" transform="rotate(124 334 187)"/><ellipse cx="105" cy="258" rx="6.2" ry="3.6" fill="#1c2026" transform="rotate(50 105 258)"/><ellipse cx="595" cy="311" rx="15.2" ry="7.8" fill="#1c2026" transform="rotate(128 595 311)"/><ellipse cx="276" cy="311" rx="16.2" ry="4.5" fill="#2c3038" transform="rotate(57 276 311)"/><ellipse cx="594" cy="224" rx="10.5" ry="10.4" fill="#b8bcc2" transform="rotate(67 594 224)"/><ellipse cx="174" cy="241" rx="12.3" ry="3.3" fill="#14161a" transform="rotate(12 174 241)"/><ellipse cx="284" cy="331" rx="12.4" ry="3.7" fill="#e0e2e6" transform="rotate(35 284 331)"/><ellipse cx="751" cy="326" rx="18.4" ry="5.1" fill="#888c94" transform="rotate(165 751 326)"/><ellipse cx="434" cy="337" rx="12.9" ry="3.3" fill="#2c3038" transform="rotate(136 434 337)"/><ellipse cx="608" cy="304" rx="12.2" ry="4.6" fill="#888c94" transform="rotate(120 608 304)"/><ellipse cx="467" cy="182" rx="20.7" ry="6.5" fill="#888c94" transform="rotate(5 467 182)"/><ellipse cx="431" cy="189" rx="11.6" ry="7.8" fill="#888c94" transform="rotate(45 431 189)"/><ellipse cx="252" cy="168" rx="21.8" ry="5.4" fill="#e0e2e6" transform="rotate(55 252 168)"/><ellipse cx="682" cy="259" rx="13.1" ry="7.5" fill="#b8bcc2" transform="rotate(171 682 259)"/><ellipse cx="720" cy="233" rx="16.3" ry="8.3" fill="#14161a" transform="rotate(118 720 233)"/><ellipse cx="647" cy="162" rx="8.5" ry="9.7" fill="#1c2026" transform="rotate(89 647 162)"/><ellipse cx="422" cy="262" rx="14.3" ry="4.5" fill="#1c2026" transform="rotate(9 422 262)"/><ellipse cx="510" cy="241" rx="9.5" ry="2.7" fill="#1c2026" transform="rotate(161 510 241)"/><ellipse cx="637" cy="342" rx="20.8" ry="6.7" fill="#888c94" transform="rotate(3 637 342)"/><ellipse cx="381" cy="236" rx="6.1" ry="6.8" fill="#1c2026" transform="rotate(111 381 236)"/><ellipse cx="718" cy="313" rx="20.2" ry="5.3" fill="#b8bcc2" transform="rotate(73 718 313)"/><ellipse cx="394" cy="224" rx="22.5" ry="6.1" fill="#0c0e12" transform="rotate(162 394 224)"/><ellipse cx="548" cy="208" rx="11.5" ry="2.9" fill="#888c94" transform="rotate(49 548 208)"/><ellipse cx="405" cy="297" rx="7.2" ry="5.4" fill="#1c2026" transform="rotate(5 405 297)"/><ellipse cx="122" cy="330" rx="14.7" ry="9.1" fill="#0c0e12" transform="rotate(44 122 330)"/><ellipse cx="151" cy="200" rx="8.8" ry="3.7" fill="#1c2026" transform="rotate(141 151 200)"/><ellipse cx="118" cy="261" rx="20.4" ry="6.5" fill="#1c2026" transform="rotate(117 118 261)"/><ellipse cx="202" cy="206" rx="6.2" ry="6.3" fill="#1c2026" transform="rotate(159 202 206)"/><ellipse cx="733" cy="299" rx="8.2" ry="4.1" fill="#888c94" transform="rotate(98 733 299)"/><ellipse cx="399" cy="208" rx="13.0" ry="3.8" fill="#2c3038" transform="rotate(89 399 208)"/><ellipse cx="401" cy="219" rx="12.8" ry="4.2" fill="#1c2026" transform="rotate(27 401 219)"/><ellipse cx="368" cy="242" rx="8.0" ry="3.9" fill="#b8bcc2" transform="rotate(169 368 242)"/><ellipse cx="224" cy="219" rx="6.4" ry="4.3" fill="#50545c" transform="rotate(47 224 219)"/><ellipse cx="500" cy="242" rx="18.7" ry="6.5" fill="#1c2026" transform="rotate(77 500 242)"/><ellipse cx="482" cy="251" rx="6.3" ry="6.0" fill="#e0e2e6" transform="rotate(77 482 251)"/><ellipse cx="514" cy="260" rx="9.0" ry="2.9" fill="#50545c" transform="rotate(107 514 260)"/><ellipse cx="350" cy="317" rx="15.9" ry="8.7" fill="#2c3038" transform="rotate(128 350 317)"/><ellipse cx="266" cy="229" rx="14.1" ry="4.2" fill="#b8bcc2" transform="rotate(55 266 229)"/><ellipse cx="192" cy="286" rx="8.8" ry="9.7" fill="#e0e2e6" transform="rotate(59 192 286)"/><ellipse cx="559" cy="323" rx="7.5" ry="3.0" fill="#888c94" transform="rotate(143 559 323)"/><ellipse cx="726" cy="284" rx="10.9" ry="5.6" fill="#50545c" transform="rotate(139 726 284)"/><ellipse cx="633" cy="251" rx="5.1" ry="4.0" fill="#14161a" transform="rotate(55 633 251)"/><ellipse cx="536" cy="310" rx="15.1" ry="5.9" fill="#b8bcc2" transform="rotate(6 536 310)"/><ellipse cx="766" cy="342" rx="13.6" ry="8.5" fill="#1c2026" transform="rotate(152 766 342)"/><ellipse cx="721" cy="191" rx="6.7" ry="3.0" fill="#1c2026" transform="rotate(3 721 191)"/><ellipse cx="561" cy="242" rx="7.5" ry="2.6" fill="#0c0e12" transform="rotate(130 561 242)"/><ellipse cx="409" cy="229" rx="8.7" ry="8.3" fill="#0c0e12" transform="rotate(113 409 229)"/><ellipse cx="391" cy="188" rx="11.0" ry="3.3" fill="#e0e2e6" transform="rotate(19 391 188)"/><ellipse cx="603" cy="181" rx="11.4" ry="9.3" fill="#14161a" transform="rotate(176 603 181)"/><ellipse cx="442" cy="174" rx="10.5" ry="4.6" fill="#888c94" transform="rotate(48 442 174)"/><ellipse cx="99" cy="187" rx="9.1" ry="4.6" fill="#2c3038" transform="rotate(84 99 187)"/><ellipse cx="306" cy="209" rx="11.9" ry="12.2" fill="#e0e2e6" transform="rotate(79 306 209)"/><ellipse cx="299" cy="202" rx="8.7" ry="2.4" fill="#888c94" transform="rotate(126 299 202)"/><ellipse cx="66" cy="296" rx="15.6" ry="5.1" fill="#0c0e12" transform="rotate(112 66 296)"/><ellipse cx="718" cy="302" rx="8.1" ry="4.1" fill="#0c0e12" transform="rotate(116 718 302)"/><ellipse cx="419" cy="246" rx="4.8" ry="5.0" fill="#50545c" transform="rotate(48 419 246)"/><ellipse cx="379" cy="170" rx="10.6" ry="3.8" fill="#14161a" transform="rotate(40 379 170)"/><ellipse cx="390" cy="184" rx="17.5" ry="6.7" fill="#2c3038" transform="rotate(109 390 184)"/><ellipse cx="632" cy="211" rx="17.9" ry="6.0" fill="#e0e2e6" transform="rotate(171 632 211)"/><ellipse cx="96" cy="235" rx="10.9" ry="3.4" fill="#888c94" transform="rotate(122 96 235)"/><ellipse cx="612" cy="330" rx="13.3" ry="5.9" fill="#888c94" transform="rotate(3 612 330)"/><ellipse cx="389" cy="217" rx="9.3" ry="7.4" fill="#50545c" transform="rotate(143 389 217)"/><ellipse cx="574" cy="217" rx="19.8" ry="7.3" fill="#14161a" transform="rotate(43 574 217)"/><ellipse cx="616" cy="325" rx="19.3" ry="6.0" fill="#888c94" transform="rotate(70 616 325)"/><ellipse cx="644" cy="193" rx="18.4" ry="7.7" fill="#1c2026" transform="rotate(164 644 193)"/><ellipse cx="267" cy="248" rx="13.0" ry="8.8" fill="#14161a" transform="rotate(166 267 248)"/><ellipse cx="619" cy="255" rx="15.8" ry="6.1" fill="#14161a" transform="rotate(75 619 255)"/><ellipse cx="483" cy="314" rx="9.6" ry="2.6" fill="#14161a" transform="rotate(177 483 314)"/><ellipse cx="134" cy="279" rx="5.2" ry="4.6" fill="#50545c" transform="rotate(14 134 279)"/><ellipse cx="705" cy="275" rx="13.2" ry="10.1" fill="#2c3038" transform="rotate(119 705 275)"/><ellipse cx="377" cy="203" rx="21.6" ry="5.9" fill="#50545c" transform="rotate(41 377 203)"/><ellipse cx="357" cy="220" rx="7.7" ry="4.4" fill="#1c2026" transform="rotate(96 357 220)"/><ellipse cx="669" cy="339" rx="13.4" ry="10.1" fill="#1c2026" transform="rotate(128 669 339)"/><ellipse cx="343" cy="223" rx="19.3" ry="6.8" fill="#b8bcc2" transform="rotate(150 343 223)"/><ellipse cx="603" cy="150" rx="4.8" ry="5.2" fill="#50545c" transform="rotate(161 603 150)"/><ellipse cx="636" cy="219" rx="17.8" ry="5.0" fill="#0c0e12" transform="rotate(101 636 219)"/><ellipse cx="628" cy="324" rx="16.8" ry="7.2" fill="#e0e2e6" transform="rotate(178 628 324)"/><ellipse cx="560" cy="235" rx="9.2" ry="4.8" fill="#14161a" transform="rotate(134 560 235)"/><ellipse cx="220" cy="237" rx="7.4" ry="7.2" fill="#2c3038" transform="rotate(68 220 237)"/><ellipse cx="684" cy="265" rx="14.9" ry="8.4" fill="#b8bcc2" transform="rotate(171 684 265)"/><ellipse cx="115" cy="319" rx="16.6" ry="6.7" fill="#0c0e12" transform="rotate(107 115 319)"/><ellipse cx="588" cy="319" rx="19.1" ry="6.8" fill="#b8bcc2" transform="rotate(43 588 319)"/><ellipse cx="298" cy="256" rx="8.8" ry="6.4" fill="#0c0e12" transform="rotate(29 298 256)"/><ellipse cx="381" cy="234" rx="9.8" ry="7.4" fill="#e0e2e6" transform="rotate(120 381 234)"/><ellipse cx="76" cy="212" rx="10.4" ry="5.4" fill="#888c94" transform="rotate(74 76 212)"/><ellipse cx="535" cy="293" rx="10.0" ry="10.0" fill="#0c0e12" transform="rotate(158 535 293)"/><ellipse cx="209" cy="228" rx="16.8" ry="5.1" fill="#0c0e12" transform="rotate(142 209 228)"/><ellipse cx="515" cy="238" rx="12.4" ry="3.6" fill="#b8bcc2" transform="rotate(31 515 238)"/><ellipse cx="329" cy="193" rx="14.0" ry="4.5" fill="#14161a" transform="rotate(145 329 193)"/><ellipse cx="81" cy="208" rx="19.7" ry="6.7" fill="#0c0e12" transform="rotate(137 81 208)"/><ellipse cx="707" cy="274" rx="12.3" ry="4.4" fill="#2c3038" transform="rotate(40 707 274)"/><ellipse cx="467" cy="336" rx="15.3" ry="8.4" fill="#2c3038" transform="rotate(50 467 336)"/><ellipse cx="293" cy="174" rx="8.3" ry="3.9" fill="#2c3038" transform="rotate(164 293 174)"/><ellipse cx="669" cy="165" rx="8.9" ry="6.7" fill="#e0e2e6" transform="rotate(110 669 165)"/><ellipse cx="700" cy="151" rx="10.7" ry="5.3" fill="#1c2026" transform="rotate(17 700 151)"/><ellipse cx="188" cy="278" rx="16.1" ry="4.7" fill="#b8bcc2" transform="rotate(106 188 278)"/><ellipse cx="546" cy="183" rx="12.2" ry="10.9" fill="#0c0e12" transform="rotate(99 546 183)"/><ellipse cx="326" cy="299" rx="11.6" ry="5.6" fill="#888c94" transform="rotate(68 326 299)"/><ellipse cx="522" cy="208" rx="16.9" ry="6.2" fill="#b8bcc2" transform="rotate(140 522 208)"/><ellipse cx="517" cy="249" rx="9.9" ry="9.9" fill="#2c3038" transform="rotate(4 517 249)"/><ellipse cx="682" cy="167" rx="9.1" ry="9.7" fill="#50545c" transform="rotate(98 682 167)"/><ellipse cx="149" cy="347" rx="6.1" ry="6.5" fill="#888c94" transform="rotate(94 149 347)"/><ellipse cx="526" cy="403" rx="12.7" ry="7.3" fill="#2a2e36" transform="rotate(133 526 403)"/><ellipse cx="489" cy="404" rx="10.2" ry="5.7" fill="#4a505c" transform="rotate(108 489 404)"/><ellipse cx="584" cy="482" rx="19.4" ry="6.4" fill="#2a2e36" transform="rotate(50 584 482)"/><ellipse cx="617" cy="419" rx="15.9" ry="7.9" fill="#20242a" transform="rotate(39 617 419)"/><ellipse cx="118" cy="444" rx="16.2" ry="6.8" fill="#2a2e36" transform="rotate(48 118 444)"/><ellipse cx="595" cy="463" rx="27.6" ry="10.7" fill="#20242a" transform="rotate(99 595 463)"/><ellipse cx="479" cy="482" rx="9.4" ry="5.3" fill="#2a2e36" transform="rotate(52 479 482)"/><ellipse cx="690" cy="501" rx="18.7" ry="6.2" fill="#4a505c" transform="rotate(150 690 501)"/><ellipse cx="321" cy="425" rx="24.9" ry="3.6" fill="#4a505c" transform="rotate(117 321 425)"/><ellipse cx="446" cy="429" rx="16.4" ry="8.3" fill="#4a505c" transform="rotate(167 446 429)"/><ellipse cx="560" cy="499" rx="20.1" ry="11.3" fill="#20242a" transform="rotate(6 560 499)"/><ellipse cx="345" cy="408" rx="32.3" ry="8.5" fill="#4a505c" transform="rotate(129 345 408)"/><ellipse cx="538" cy="446" rx="29.0" ry="9.5" fill="#4a505c" transform="rotate(48 538 446)"/><ellipse cx="606" cy="463" rx="25.0" ry="8.7" fill="#20242a" transform="rotate(105 606 463)"/><ellipse cx="207" cy="517" rx="13.1" ry="11.3" fill="#2a2e36" transform="rotate(8 207 517)"/><ellipse cx="156" cy="419" rx="28.1" ry="7.0" fill="#545a66" transform="rotate(69 156 419)"/><ellipse cx="442" cy="514" rx="14.9" ry="17.1" fill="#20242a" transform="rotate(130 442 514)"/><ellipse cx="624" cy="440" rx="11.8" ry="8.1" fill="#20242a" transform="rotate(1 624 440)"/><ellipse cx="779" cy="489" rx="13.4" ry="11.0" fill="#4a505c" transform="rotate(113 779 489)"/><ellipse cx="156" cy="489" rx="29.1" ry="5.3" fill="#2a2e36" transform="rotate(95 156 489)"/><ellipse cx="495" cy="457" rx="12.3" ry="4.9" fill="#20242a" transform="rotate(177 495 457)"/><ellipse cx="222" cy="428" rx="13.5" ry="12.1" fill="#2a2e36" transform="rotate(132 222 428)"/><ellipse cx="783" cy="462" rx="16.8" ry="3.8" fill="#4a505c" transform="rotate(170 783 462)"/><ellipse cx="241" cy="502" rx="14.6" ry="8.6" fill="#4a505c" transform="rotate(97 241 502)"/><ellipse cx="582" cy="447" rx="22.2" ry="8.7" fill="#545a66" transform="rotate(162 582 447)"/><ellipse cx="132" cy="426" rx="20.4" ry="5.2" fill="#4a505c" transform="rotate(41 132 426)"/><ellipse cx="85" cy="408" rx="10.5" ry="4.6" fill="#20242a" transform="rotate(93 85 408)"/><ellipse cx="548" cy="425" rx="21.0" ry="3.1" fill="#545a66" transform="rotate(103 548 425)"/><ellipse cx="225" cy="455" rx="12.0" ry="10.2" fill="#20242a" transform="rotate(119 225 455)"/><ellipse cx="362" cy="455" rx="31.2" ry="6.8" fill="#2a2e36" transform="rotate(177 362 455)"/><ellipse cx="86" cy="485" rx="17.1" ry="13.8" fill="#545a66" transform="rotate(34 86 485)"/><ellipse cx="147" cy="421" rx="29.2" ry="4.6" fill="#2a2e36" transform="rotate(14 147 421)"/><ellipse cx="78" cy="517" rx="42.2" ry="5.9" fill="#4a505c" transform="rotate(167 78 517)"/><ellipse cx="166" cy="457" rx="14.7" ry="5.4" fill="#545a66" transform="rotate(11 166 457)"/><ellipse cx="744" cy="492" rx="21.2" ry="4.4" fill="#545a66" transform="rotate(131 744 492)"/><ellipse cx="158" cy="435" rx="33.9" ry="8.7" fill="#20242a" transform="rotate(98 158 435)"/><ellipse cx="83" cy="468" rx="29.8" ry="4.9" fill="#2a2e36" transform="rotate(28 83 468)"/><ellipse cx="687" cy="408" rx="18.2" ry="2.9" fill="#4a505c" transform="rotate(73 687 408)"/><ellipse cx="480" cy="405" rx="15.8" ry="3.5" fill="#20242a" transform="rotate(102 480 405)"/><ellipse cx="750" cy="424" rx="19.4" ry="10.7" fill="#20242a" transform="rotate(71 750 424)"/></g><g filter="url(#b4b)"><polygon points="220,205 430,195 445,280 225,290" fill="#8a8e92"/><polygon points="235,215 420,207 425,240 238,250" fill="#9ca0a4"/><rect x="595" y="290" width="52" height="32" fill="#e23a2a"/><circle cx="105" cy="215" r="20" fill="#2aa4ae"/></g>
<g filter="url(#b4c)" fill="none" stroke-linecap="round">
 <path d="M135 60 L 150 150" stroke="#0c0e12" stroke-width="8"/>
 <path d="M100 372 H 760" stroke="#5c6270" stroke-width="6"/>
 <circle cx="200" cy="375" r="6" fill="#181a1e"/><circle cx="290" cy="380" r="6" fill="#181a1e"/>
 <circle cx="540" cy="380" r="6" fill="#181a1e"/><circle cx="640" cy="375" r="6" fill="#181a1e"/>
</g>
<rect x="15" y="18" width="330" height="28" fill="#fff"/>

</g>
</svg>

<span class="t" style="left:208.70px;top:64.18px;font-size:4.4px;color:#0a0a0a;transform:scaleX(0.8992);font-weight:bold;font-family:'Liberation Mono', monospace;">001/004 12/11/19 1:00pm</span>
<span class="t" style="left:210.30px;top:156.09px;font-size:5.8px;color:#0a0a0a;transform:scaleX(0.9148);font-weight:bold;font-family:'Liberation Mono', monospace;">002/004 12/11/19 1:00pm</span>
<span class="t" style="left:207.90px;top:245.68px;font-size:4.4px;color:#0a0a0a;transform:scaleX(0.8679);font-weight:bold;font-family:'Liberation Mono', monospace;">003/004 12/11/19 1:00pm</span>
<span class="t" style="left:208.20px;top:336.68px;font-size:4.4px;color:#0a0a0a;transform:scaleX(0.8629);font-weight:bold;font-family:'Liberation Mono', monospace;">004/004 12/11/19 1:00pm</span>
<div class="a " style="left:194px;top:462.5px;width:577px;height:43.5px;background:#f0f0f0;border-top:1px solid #6e6e6e;border-left:1px solid #6e6e6e;border-right:1px solid #fff;border-bottom:1px solid #fff"></div>
<div class="a btn" style="left:267.3px;top:468.3px;width:49px;height:32.7px;"></div>
<div class="a btn" style="left:355.8px;top:468.3px;width:48.2px;height:32.7px;"></div>
<div class="a btn" style="left:440.5px;top:468.3px;width:49.8px;height:32.7px;"></div>
<div class="a btn" style="left:526.2px;top:468.3px;width:49.1px;height:32.7px;"></div>
<div class="a btn" style="left:612.8px;top:468.3px;width:48px;height:32.7px;"></div>
<div class="a btn" style="left:717.3px;top:468.3px;width:48.7px;height:32.7px;"></div>
<svg style="left:283px;top:471px" width="16" height="16" viewBox="283 471 16 16"><defs><filter id="brf"><feGaussianBlur stdDeviation=".45"/></filter></defs><g filter="url(#brf)"><path d="M289.6 473.6 Q284.6 475.6 285.4 480 Q286.4 484.6 291.4 484.6 L291.4 479.4 Q288.6 478.8 289.6 473.6 Z" fill="#bdeef6"/><path d="M287.2 476.4 Q286.6 481 291.4 484 L291.4 479.8 Q289 479.6 288.6 476 Z" fill="#1a9cbc"/><path d="M291.2 473.4 Q296.4 473.6 296.5 478.6 Q296.4 481.6 295 483.4 Q294.8 479.6 293.2 479 Q291 477.2 291.2 473.4 Z" fill="#88d014"/><path d="M295.6 479.4 Q296 481.6 295 483.4 Q294.6 481 294.4 479.6 Z" fill="#5c6c20"/></g></svg>
<svg style="left:370px;top:469.3px" width="18" height="20" viewBox="370 469.3 18 20"><defs><linearGradient id="dlg" x1="0" y1="0" x2="0" y2="1"><stop offset="0" stop-color="#aab2be"/><stop offset="1" stop-color="#3e4a5c"/></linearGradient></defs><path d="M372 471.3 H380.6 L385.8 476.5 V487.8 H372 Z" fill="#fafcff" stroke="#858c94" stroke-width=".8"/><path d="M371.8 487.8 H386" stroke="#4c5258" stroke-width="1.2"/><path d="M380.6 471.3 V476.5 H385.8 Z" fill="#e8ecf0" stroke="#8c949c" stroke-width=".7"/><path d="M377.3 477.3 h3.8 v3.8 h1.9 l-3.8 3.8 l-3.8 -3.8 h1.9 Z" fill="url(#dlg)"/></svg><svg style="left:454px;top:471px" width="20" height="19" viewBox="454 471 20 19"><rect x="456" y="475" width="13.5" height="13" fill="#fdfdf4"/><rect x="456" y="478.3" width="4.4" height="9.7" fill="#f4f4a2"/><g stroke="#949a84" stroke-width=".8" fill="none"><path d="M456 475 H469.5 M456 478.3 H469.5 M456 481.5 H469.5 M456 484.8 H469.5 M456 488 H469.5"/><path d="M456 475 V488 M460.4 475 V488 M464.8 475 V488 M469.5 475 V488"/></g><path d="M456 488 H469.5 M456 475 V488" stroke="#6e7466" stroke-width="1" fill="none"/><path d="M470.2 474.2 L464.6 479.6" stroke="#e6d63c" stroke-width="2.4" stroke-linecap="butt"/><path d="M471.6 472.9 L470.2 474.2" stroke="#747474" stroke-width="2.2"/><path d="M464.6 479.6 L463.4 480.8" stroke="#4a4438" stroke-width="1.4"/></svg>
<svg style="left:540px;top:470px" width="22" height="18" viewBox="540 470 22 18"><rect x="542.3" y="472.6" width="16.5" height="13" fill="#cdf5ee" stroke="#5ab2a4" stroke-width="1"/><path d="M550.5 475.6 h5 M550.5 478 h5.5 M544.5 482.6 h7" stroke="#7cc8bc" stroke-width=".8" fill="none"/><circle cx="554.4" cy="482" r="1.7" fill="#8cb4b0"/><ellipse cx="545.6" cy="476" rx="3.4" ry="3.8" fill="#d24a2c"/><rect x="544.9" y="473.4" width="1.4" height="5.2" fill="#fff0e4"/></svg>
<svg style="left:627.2px;top:469px" width="18" height="20" viewBox="627.2 469 18 20"><defs><linearGradient id="img" x1="0" y1="0" x2="0" y2="1"><stop offset="0" stop-color="#aab2be"/><stop offset="1" stop-color="#3e4a5c"/></linearGradient></defs><path d="M629.2 471 H637.8 L643 476.2 V487.5 H629.2 Z" fill="#fafcff" stroke="#858c94" stroke-width=".8"/><path d="M629 487.5 H643.2" stroke="#4c5258" stroke-width="1.2"/><path d="M637.8 471 V476.2 H643 Z" fill="#e8ecf0" stroke="#8c949c" stroke-width=".7"/><path d="M634.5 477 h3.8 v3.8 h1.9 l-3.8 3.8 l-3.8 -3.8 h1.9 Z" fill="url(#img)"/></svg><svg style="left:732px;top:471px" width="18" height="18" viewBox="732 471 18 18"><defs><linearGradient id="gdn" x1="0" y1="0" x2="1" y2="1"><stop offset="0" stop-color="#e2e2e2"/><stop offset="1" stop-color="#a8a8a8"/></linearGradient></defs><circle cx="740.95" cy="479.9" r="7.1" fill="url(#gdn)" stroke="#7c7c7c" stroke-width="1.3"/><path d="M737 480.2 L739.8 482.8 L745.4 477" fill="none" stroke="#fff" stroke-width="2.1" stroke-linecap="round" stroke-linejoin="round"/></svg>

<span class="t" style="left:277.00px;top:488.45px;font-size:8.8px;color:#1e1e1e;transform:scaleX(0.8957);">Refresh</span>
<span class="t" style="left:362.10px;top:488.45px;font-size:8.8px;color:#1e1e1e;transform:scaleX(0.8843);">Download</span>
<span class="t" style="left:457.50px;top:488.45px;font-size:8.8px;color:#1e1e1e;transform:scaleX(0.9096);">Edit</span>
<span class="t" style="left:531.90px;top:488.45px;font-size:8.8px;color:#1e1e1e;transform:scaleX(0.9164);">Certificate</span>
<div class="a " style="left:622.5px;top:489px;width:30.5px;height:10.8px;background:#fafa3c"></div>
<span class="t" style="left:624.50px;top:488.25px;font-size:8.8px;color:#1e1e1e;transform:scaleX(0.8813);">Imprint</span>
<span class="t" style="left:731.80px;top:488.45px;font-size:8.8px;color:#1e1e1e;transform:scaleX(0.8606);">Done</span>
</body></html>
